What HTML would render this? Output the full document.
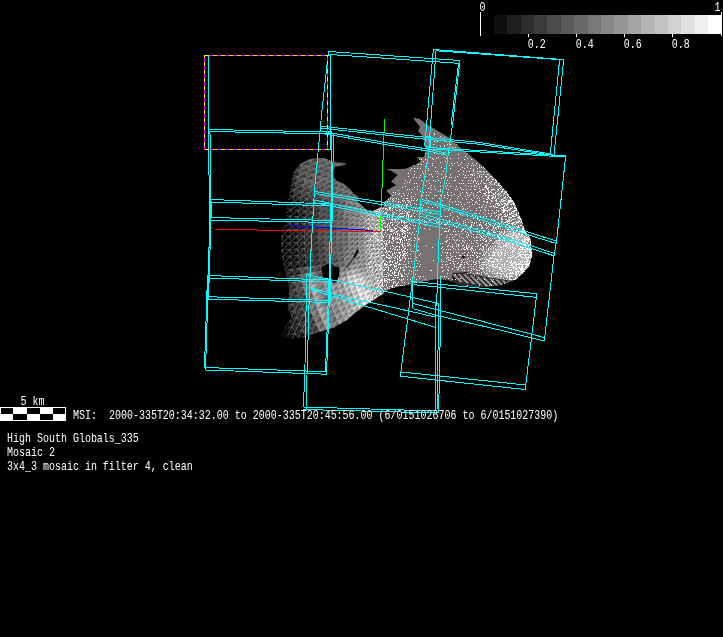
<!DOCTYPE html>
<html><head><meta charset="utf-8"><title>MSI mosaic view</title>
<style>
html,body{margin:0;padding:0;background:#000;overflow:hidden}
svg{display:block;position:absolute;left:0;top:0;will-change:transform}
text{font-family:"Liberation Mono","DejaVu Sans Mono",monospace;font-size:12.8px}
.c{fill:none;stroke:#0ff;stroke-width:1;shape-rendering:crispEdges}
.ax{fill:none;stroke-width:1;shape-rendering:crispEdges}
</style></head><body>
<svg width="723" height="637" viewBox="0 0 723 637">
<rect width="723" height="637" fill="#000"/>
<defs>
<clipPath id="cl"><polygon points="384.0,293.0 379.0,296.2 367.4,304.0 361.5,307.9 353.7,313.7 347.9,319.6 334.3,327.4 318.7,332.2 301.0,338.0 289.5,339.0 278.8,336.0 285.0,328.0 291.4,317.6 287.5,307.9 289.5,288.4 284.6,269.0 280.7,249.5 282.0,232.0 285.0,215.0 289.0,195.0 293.9,171.5 300.0,164.0 310.0,159.0 324.0,157.7 332.8,161.5 351.7,164.3 335.3,166.8 333.3,170.4 333.3,176.5 336.4,180.6 343.5,183.7 349.6,188.8 353.7,193.9 358.8,196.4 357.0,201.0 367.0,210.2 373.0,211.0 381.3,207.0 384.0,209.0"/></clipPath>
<clipPath id="cr"><polygon points="412.7,117.4 419.5,118.8 427.3,124.6 439.0,131.4 448.7,137.3 458.4,146.0 468.0,153.8 477.9,161.6 487.6,170.4 497.4,181.0 507.0,191.8 514.9,203.5 520.7,217.0 524.6,228.8 530.5,238.7 532.4,254.3 529.5,266.0 522.7,273.7 516.0,279.5 501.0,285.0 488.0,286.5 474.0,287.0 460.0,285.0 446.7,279.6 435.0,279.6 419.5,282.5 405.8,285.4 400.0,286.4 390.7,288.4 383.0,293.0 383.0,209.0 384.2,202.3 390.8,195.7 385.9,190.7 395.8,185.0 390.8,181.7 397.4,175.0 392.5,171.8 385.0,168.5 395.8,169.0 405.7,168.5 415.5,164.4 420.5,161.0 416.4,157.0 423.8,157.0 425.4,151.2 424.6,143.0 423.0,136.4 418.0,131.4 419.7,126.5 415.5,121.5"/></clipPath>
<filter id="bl" x="-20%" y="-20%" width="140%" height="140%"><feGaussianBlur stdDeviation="3.5"/></filter>
</defs>
<g clip-path="url(#cl)">
<polygon fill="#0a0a0a" points="384.0,293.0 379.0,296.2 367.4,304.0 361.5,307.9 353.7,313.7 347.9,319.6 334.3,327.4 318.7,332.2 301.0,338.0 289.5,339.0 278.8,336.0 285.0,328.0 291.4,317.6 287.5,307.9 289.5,288.4 284.6,269.0 280.7,249.5 282.0,232.0 285.0,215.0 289.0,195.0 293.9,171.5 300.0,164.0 310.0,159.0 324.0,157.7 332.8,161.5 351.7,164.3 335.3,166.8 333.3,170.4 333.3,176.5 336.4,180.6 343.5,183.7 349.6,188.8 353.7,193.9 358.8,196.4 357.0,201.0 367.0,210.2 373.0,211.0 381.3,207.0 384.0,209.0"/>
<path fill="rgb(0,0,0)" stroke="rgb(0,0,0)" stroke-width="0.3" d="M291.4,209.4L283.8,208.5L283.1,215.3ZM291.4,209.4L283.1,215.3L290.7,216.0ZM290.7,216.0L283.1,215.3L282.6,222.2ZM290.7,216.0L282.6,222.2L290.2,222.7ZM290.2,222.7L282.3,229.1L289.9,229.3ZM289.9,229.3L282.2,236.0L289.8,236.0ZM282.3,242.9L274.3,243.1L274.6,250.3ZM282.3,242.9L274.6,250.3L282.6,249.8ZM282.6,249.8L274.6,250.3L275.2,257.4ZM282.6,249.8L275.2,257.4L283.1,256.7ZM283.1,256.7L275.2,257.4L275.9,264.5ZM283.1,256.7L275.9,264.5L283.8,263.5Z"/>
<path fill="rgb(6,6,6)" stroke="rgb(6,6,6)" stroke-width="0.3" d="M298.8,210.3L290.7,216.0L298.1,216.7ZM293.4,196.2L284.7,201.7L292.3,202.8ZM292.3,202.8L284.7,201.7L283.8,208.5ZM292.3,202.8L283.8,208.5L291.4,209.4ZM290.2,222.7L282.6,222.2L282.3,229.1ZM289.9,229.3L282.3,229.1L282.2,236.0ZM289.8,236.0L282.3,242.9L289.9,242.7ZM289.9,242.7L282.3,242.9L282.6,249.8ZM289.9,242.7L282.6,249.8L290.2,249.3ZM290.7,256.0L283.8,263.5L291.4,262.6ZM282.3,229.1L274.3,228.9L274.2,236.0ZM282.3,229.1L274.2,236.0L282.2,236.0ZM282.2,236.0L274.2,236.0L274.3,243.1ZM282.2,236.0L274.3,243.1L282.3,242.9ZM289.5,319.8L284.5,329.5L292.1,326.4ZM294.9,333.0L290.5,343.0L297.9,339.4Z"/>
<path fill="rgb(12,12,12)" stroke="rgb(12,12,12)" stroke-width="0.3" d="M299.6,203.9L291.4,209.4L298.8,210.3ZM298.8,210.3L291.4,209.4L290.7,216.0ZM297.2,236.0L289.9,242.7L297.3,242.4ZM297.3,242.4L290.2,249.3L297.6,248.9ZM297.6,248.9L290.7,256.0L298.1,255.3ZM298.1,255.3L291.4,262.6L298.8,261.7ZM298.8,261.7L292.3,269.2L299.6,268.1ZM294.7,189.7L285.9,194.9L293.4,196.2ZM293.4,196.2L285.9,194.9L284.7,201.7ZM289.8,236.0L282.2,236.0L282.3,242.9ZM290.2,249.3L282.6,249.8L283.1,256.7ZM290.2,249.3L283.1,256.7L290.7,256.0ZM290.7,256.0L283.1,256.7L283.8,263.5ZM291.4,262.6L284.7,270.3L292.3,269.2ZM283.8,263.5L275.9,264.5L276.9,271.5ZM283.8,263.5L276.9,271.5L284.7,270.3ZM289.5,319.8L281.8,322.7L284.5,329.5ZM292.1,326.4L284.5,329.5L287.4,336.3ZM292.1,326.4L287.4,336.3L294.9,333.0ZM294.9,333.0L287.4,336.3L290.5,343.0Z"/>
<path fill="rgb(18,18,18)" stroke="rgb(18,18,18)" stroke-width="0.3" d="M305.9,211.1L298.1,216.7L305.2,217.3ZM304.7,223.5L297.3,229.6L304.5,229.8ZM304.5,242.2L297.6,248.9L304.7,248.5ZM300.7,197.5L292.3,202.8L299.6,203.9ZM299.6,203.9L292.3,202.8L291.4,209.4ZM298.1,216.7L290.2,222.7L297.6,223.1ZM297.6,223.1L289.9,229.3L297.3,229.6ZM297.3,229.6L289.8,236.0L297.2,236.0ZM297.2,236.0L289.8,236.0L289.9,242.7ZM297.3,242.4L289.9,242.7L290.2,249.3ZM297.6,248.9L290.2,249.3L290.7,256.0ZM298.1,255.3L290.7,256.0L291.4,262.6ZM298.8,261.7L291.4,262.6L292.3,269.2ZM291.4,262.6L283.8,263.5L284.7,270.3ZM302.1,329.7L297.9,339.4L305.0,336.0ZM305.0,336.0L301.1,345.8L308.1,342.1Z"/>
<path fill="rgb(24,24,24)" stroke="rgb(24,24,24)" stroke-width="0.3" d="M306.7,205.0L298.8,210.3L305.9,211.1ZM305.2,217.3L297.6,223.1L304.7,223.5ZM304.4,236.0L297.3,242.4L304.5,242.2ZM304.7,248.5L298.1,255.3L305.2,254.7ZM305.9,260.9L299.6,268.1L306.7,267.0ZM298.1,216.7L290.7,216.0L290.2,222.7ZM297.6,223.1L290.2,222.7L289.9,229.3ZM297.3,229.6L289.9,229.3L289.8,236.0ZM296.2,183.2L287.2,188.1L294.7,189.7ZM294.7,189.7L287.2,188.1L285.9,194.9ZM292.4,303.9L287.1,313.1L294.6,310.5ZM296.9,317.0L292.1,326.4L299.4,323.4ZM299.4,323.4L294.9,333.0L302.1,329.7ZM305.0,336.0L297.9,339.4L301.1,345.8Z"/>
<path fill="rgb(30,30,30)" stroke="rgb(30,30,30)" stroke-width="0.3" d="M313.5,206.0L305.9,211.1L312.7,212.0ZM311.6,224.0L304.5,229.8L311.3,230.0ZM311.6,248.0L305.2,254.7L312.1,254.0ZM312.7,260.0L306.7,267.0L313.5,266.0ZM307.7,198.8L299.6,203.9L306.7,205.0ZM306.7,205.0L299.6,203.9L298.8,210.3ZM305.9,211.1L298.8,210.3L298.1,216.7ZM305.2,217.3L298.1,216.7L297.6,223.1ZM304.7,223.5L297.6,223.1L297.3,229.6ZM304.5,229.8L297.2,236.0L304.4,236.0ZM304.5,242.2L297.3,242.4L297.6,248.9ZM305.2,254.7L298.8,261.7L305.9,260.9ZM305.9,260.9L298.8,261.7L299.6,268.1ZM300.7,197.5L293.4,196.2L292.3,202.8ZM299.6,268.1L293.4,275.8L300.7,274.5ZM296.2,183.2L288.7,181.4L287.2,188.1ZM292.3,269.2L285.9,277.1L293.4,275.8ZM297.9,295.3L292.4,303.9L299.7,301.7ZM304.1,314.3L299.4,323.4L306.5,320.5ZM288.7,290.6L282.8,299.4L290.5,297.3ZM290.5,297.3L284.8,306.3L292.4,303.9ZM294.6,310.5L289.5,319.8L296.9,317.0ZM302.1,329.7L294.9,333.0L297.9,339.4Z"/>
<path fill="rgb(36,36,36)" stroke="rgb(36,36,36)" stroke-width="0.3" d="M318.0,230.2L311.2,236.0L317.9,236.0ZM318.2,247.6L312.1,254.0L318.7,253.4ZM314.5,200.1L306.7,205.0L313.5,206.0ZM312.7,212.0L305.2,217.3L312.1,218.0ZM312.1,218.0L304.7,223.5L311.6,224.0ZM311.2,236.0L304.5,242.2L311.3,242.0ZM311.3,242.0L304.7,248.5L311.6,248.0ZM304.5,229.8L297.3,229.6L297.2,236.0ZM304.4,236.0L297.2,236.0L297.3,242.4ZM304.7,248.5L297.6,248.9L298.1,255.3ZM301.9,191.2L293.4,196.2L300.7,197.5ZM299.7,170.3L290.5,174.7L297.9,176.7ZM297.9,176.7L288.7,181.4L296.2,183.2ZM292.3,269.2L284.7,270.3L285.9,277.1ZM293.4,275.8L287.2,283.9L294.7,282.3ZM294.7,282.3L288.7,290.6L296.2,288.8ZM288.7,290.6L281.0,292.5L282.8,299.4ZM290.5,297.3L282.8,299.4L284.8,306.3ZM292.4,303.9L284.8,306.3L287.1,313.1ZM294.6,310.5L287.1,313.1L289.5,319.8ZM296.9,317.0L289.5,319.8L292.1,326.4ZM299.4,323.4L292.1,326.4L294.9,333.0Z"/>
<path fill="rgb(42,42,42)" stroke="rgb(42,42,42)" stroke-width="0.3" d="M320.1,207.0L312.7,212.0L319.3,212.8ZM319.3,212.8L312.1,218.0L318.7,218.6ZM318.7,218.6L311.6,224.0L318.2,224.4ZM317.9,236.0L311.3,242.0L318.0,241.8ZM318.0,241.8L311.6,248.0L318.2,247.6ZM318.7,253.4L312.7,260.0L319.3,259.2ZM313.5,206.0L306.7,205.0L305.9,211.1ZM311.6,224.0L304.7,223.5L304.5,229.8ZM311.3,230.0L304.4,236.0L311.2,236.0ZM311.6,248.0L304.7,248.5L305.2,254.7ZM312.1,254.0L305.9,260.9L312.7,260.0ZM312.7,260.0L305.9,260.9L306.7,267.0ZM307.7,198.8L300.7,197.5L299.6,203.9ZM305.2,254.7L298.1,255.3L298.8,261.7ZM303.4,184.9L294.7,189.7L301.9,191.2ZM299.6,268.1L292.3,269.2L293.4,275.8ZM296.2,288.8L290.5,297.3L297.9,295.3ZM299.7,301.7L294.6,310.5L301.8,308.0ZM301.8,308.0L296.9,317.0L304.1,314.3ZM306.5,320.5L302.1,329.7L309.1,326.6ZM309.1,326.6L305.0,336.0L311.9,332.6ZM311.9,332.6L308.1,342.1L314.9,338.6Z"/>
<path fill="rgb(48,48,48)" stroke="rgb(48,48,48)" stroke-width="0.3" d="M325.7,258.5L320.1,265.0L326.4,264.0ZM321.0,201.3L313.5,206.0L320.1,207.0ZM318.2,224.4L311.3,230.0L318.0,230.2ZM319.3,259.2L313.5,266.0L320.1,265.0ZM314.5,200.1L307.7,198.8L306.7,205.0ZM312.7,212.0L305.9,211.1L305.2,217.3ZM312.1,218.0L305.2,217.3L304.7,223.5ZM311.2,236.0L304.4,236.0L304.5,242.2ZM308.9,192.7L300.7,197.5L307.7,198.8ZM300.7,274.5L294.7,282.3L301.9,280.8ZM306.8,299.5L301.8,308.0L308.8,305.6ZM311.0,311.7L306.5,320.5L313.3,317.7ZM313.3,317.7L309.1,326.6L315.9,323.6ZM315.9,323.6L311.9,332.6L318.6,329.4ZM318.6,329.4L314.9,338.6L321.5,335.2ZM301.8,164.0L292.4,168.1L299.7,170.3ZM297.9,176.7L290.5,174.7L288.7,181.4ZM293.4,275.8L285.9,277.1L287.2,283.9ZM294.7,282.3L287.2,283.9L288.7,290.6ZM297.9,295.3L290.5,297.3L292.4,303.9ZM304.1,314.3L296.9,317.0L299.4,323.4Z"/>
<path fill="rgb(54,54,54)" stroke="rgb(54,54,54)" stroke-width="0.3" d="M325.1,219.1L318.2,224.4L324.7,224.7ZM324.4,241.6L318.2,247.6L324.7,247.3ZM324.7,247.3L318.7,253.4L325.1,252.9ZM325.1,252.9L319.3,259.2L325.7,258.5ZM322.2,195.5L314.5,200.1L321.0,201.3ZM319.3,212.8L312.7,212.0L312.1,218.0ZM318.0,230.2L311.3,230.0L311.2,236.0ZM318.2,247.6L311.6,248.0L312.1,254.0ZM315.7,194.2L307.7,198.8L314.5,200.1ZM311.3,230.0L304.5,229.8L304.4,236.0ZM311.3,242.0L304.5,242.2L304.7,248.5ZM312.1,254.0L305.2,254.7L305.9,260.9ZM310.3,186.6L301.9,191.2L308.9,192.7ZM305.0,178.7L296.2,183.2L303.4,184.9ZM301.9,191.2L294.7,189.7L293.4,196.2ZM305.0,293.3L299.7,301.7L306.8,299.5ZM304.1,157.7L294.6,161.5L301.8,164.0ZM299.7,170.3L292.4,168.1L290.5,174.7ZM299.7,301.7L292.4,303.9L294.6,310.5ZM301.8,308.0L294.6,310.5L296.9,317.0ZM306.5,320.5L299.4,323.4L302.1,329.7ZM311.9,332.6L305.0,336.0L308.1,342.1Z"/>
<path fill="rgb(60,60,60)" stroke="rgb(60,60,60)" stroke-width="0.3" d="M334.5,198.2L327.4,202.4L333.4,203.5ZM332.6,208.9L325.7,213.5L331.8,214.3ZM331.8,214.3L325.1,219.1L331.3,219.7ZM330.8,225.1L324.4,230.4L330.6,230.6ZM327.4,202.4L320.1,207.0L326.4,208.0ZM326.4,208.0L319.3,212.8L325.7,213.5ZM325.7,213.5L318.7,218.6L325.1,219.1ZM324.7,224.7L318.0,230.2L324.4,230.4ZM324.4,230.4L317.9,236.0L324.3,236.0ZM324.3,236.0L318.0,241.8L324.4,241.6ZM323.5,189.9L315.7,194.2L322.2,195.5ZM320.1,207.0L313.5,206.0L312.7,212.0ZM318.7,218.6L312.1,218.0L311.6,224.0ZM317.9,236.0L311.2,236.0L311.3,242.0ZM318.0,241.8L311.3,242.0L311.6,248.0ZM318.7,253.4L312.1,254.0L312.7,260.0ZM319.3,259.2L312.7,260.0L313.5,266.0ZM320.1,265.0L314.5,271.9L321.0,270.7ZM317.0,188.3L308.9,192.7L315.7,194.2ZM306.7,267.0L300.7,274.5L307.7,273.2ZM306.8,172.5L297.9,176.7L305.0,178.7ZM303.4,184.9L296.2,183.2L294.7,189.7ZM300.7,274.5L293.4,275.8L294.7,282.3ZM301.9,280.8L296.2,288.8L303.4,287.1ZM303.4,287.1L297.9,295.3L305.0,293.3ZM308.8,305.6L304.1,314.3L311.0,311.7ZM296.2,288.8L288.7,290.6L290.5,297.3ZM309.1,326.6L302.1,329.7L305.0,336.0Z"/>
<path fill="rgb(66,66,66)" stroke="rgb(66,66,66)" stroke-width="0.3" d="M338.5,209.8L331.8,214.3L337.8,215.0ZM337.8,215.0L331.3,219.7L337.2,220.2ZM337.8,257.0L332.6,263.1L338.5,262.2ZM333.4,203.5L326.4,208.0L332.6,208.9ZM330.6,230.6L324.3,236.0L330.5,236.0ZM330.6,241.4L324.7,247.3L330.8,246.9ZM330.8,246.9L325.1,252.9L331.3,252.3ZM331.3,252.3L325.7,258.5L331.8,257.7ZM331.8,257.7L326.4,264.0L332.6,263.1ZM329.7,191.4L322.2,195.5L328.4,196.9ZM328.4,196.9L321.0,201.3L327.4,202.4ZM326.4,264.0L321.0,270.7L327.4,269.6ZM321.0,201.3L314.5,200.1L313.5,206.0ZM318.2,224.4L311.6,224.0L311.3,230.0ZM322.1,170.9L313.6,174.6L320.2,176.7ZM320.2,176.7L311.9,180.6L318.5,182.5ZM319.9,157.1L311.0,160.3L317.7,162.9ZM317.7,162.9L308.8,166.4L315.6,168.7ZM315.6,168.7L306.8,172.5L313.6,174.6ZM313.6,174.6L305.0,178.7L311.9,180.6ZM308.9,192.7L301.9,191.2L300.7,197.5ZM311.0,160.3L301.8,164.0L308.8,166.4ZM308.8,166.4L299.7,170.3L306.8,172.5ZM306.8,299.5L299.7,301.7L301.8,308.0ZM311.0,311.7L304.1,314.3L306.5,320.5ZM313.3,317.7L306.5,320.5L309.1,326.6ZM315.9,323.6L309.1,326.6L311.9,332.6ZM301.8,164.0L294.6,161.5L292.4,168.1Z"/>
<path fill="rgb(72,72,72)" stroke="rgb(72,72,72)" stroke-width="0.3" d="M355.2,187.5L348.4,190.7L353.8,192.2ZM343.5,215.7L337.2,220.2L343.0,220.7ZM346.0,179.1L338.6,182.4L344.3,184.1ZM340.4,199.4L333.4,203.5L339.3,204.6ZM339.3,204.6L332.6,208.9L338.5,209.8ZM336.8,225.5L330.6,230.6L336.6,230.7ZM336.6,230.7L330.5,236.0L336.5,236.0ZM336.6,241.3L330.8,246.9L336.8,246.5ZM338.5,262.2L333.4,268.5L339.3,267.4ZM344.1,167.0L336.4,169.9L342.2,172.1ZM338.6,182.4L331.1,185.9L337.1,187.6ZM337.1,187.6L329.7,191.4L335.7,192.9ZM335.7,192.9L328.4,196.9L334.5,198.2ZM331.3,219.7L324.7,224.7L330.8,225.1ZM330.5,236.0L324.4,241.6L330.6,241.4ZM338.4,164.6L330.3,167.6L336.4,169.9ZM336.4,169.9L328.4,173.1L334.4,175.2ZM332.7,180.5L324.9,184.2L331.1,185.9ZM331.1,185.9L323.5,189.9L329.7,191.4ZM325.1,219.1L318.7,218.6L318.2,224.4ZM324.4,241.6L318.0,241.8L318.2,247.6ZM324.7,247.3L318.2,247.6L318.7,253.4ZM325.7,258.5L319.3,259.2L320.1,265.0ZM334.8,156.9L326.3,159.7L332.5,162.2ZM330.3,167.6L322.1,170.9L328.4,173.1ZM328.4,173.1L320.2,176.7L326.6,178.6ZM324.9,184.2L317.0,188.3L323.5,189.9ZM322.2,195.5L315.7,194.2L314.5,200.1ZM321.0,270.7L315.7,277.8L322.2,276.5ZM328.7,154.1L319.9,157.1L326.3,159.7ZM315.7,194.2L308.9,192.7L307.7,198.8ZM313.5,266.0L307.7,273.2L314.5,271.9ZM311.9,180.6L303.4,184.9L310.3,186.6ZM313.3,154.3L304.1,157.7L311.0,160.3ZM305.0,293.3L297.9,295.3L299.7,301.7ZM318.6,329.4L311.9,332.6L314.9,338.6Z"/>
<path fill="rgb(78,78,78)" stroke="rgb(78,78,78)" stroke-width="0.3" d="M349.9,185.8L342.9,189.2L348.4,190.7ZM346.0,200.6L339.3,204.6L345.0,205.6ZM342.4,241.1L336.8,246.5L342.6,246.2ZM342.6,246.2L337.2,251.8L343.0,251.3ZM343.5,256.3L338.5,262.2L344.2,261.4ZM344.3,184.1L337.1,187.6L342.9,189.2ZM342.9,189.2L335.7,192.9L341.5,194.3ZM341.5,194.3L334.5,198.2L340.4,199.4ZM337.2,220.2L330.8,225.1L336.8,225.5ZM336.5,236.0L330.6,241.4L336.6,241.3ZM336.8,246.5L331.3,252.3L337.2,251.8ZM337.2,251.8L331.8,257.7L337.8,257.0ZM340.3,177.2L332.7,180.5L338.6,182.4ZM332.6,263.1L327.4,269.6L333.4,268.5ZM340.6,159.5L332.5,162.2L338.4,164.6ZM334.4,175.2L326.6,178.6L332.7,180.5ZM327.4,202.4L321.0,201.3L320.1,207.0ZM324.7,224.7L318.2,224.4L318.0,230.2ZM325.1,252.9L318.7,253.4L319.3,259.2ZM332.5,162.2L324.1,165.3L330.3,167.6ZM326.6,178.6L318.5,182.5L324.9,184.2ZM323.5,189.9L317.0,188.3L315.7,194.2ZM326.3,159.7L317.7,162.9L324.1,165.3ZM324.1,165.3L315.6,168.7L322.1,170.9ZM318.5,182.5L310.3,186.6L317.0,188.3ZM310.3,186.6L303.4,184.9L301.9,191.2ZM306.7,267.0L299.6,268.1L300.7,274.5ZM307.7,273.2L301.9,280.8L308.9,279.3ZM305.0,178.7L297.9,176.7L296.2,183.2ZM301.9,280.8L294.7,282.3L296.2,288.8ZM303.4,287.1L296.2,288.8L297.9,295.3ZM308.8,305.6L301.8,308.0L304.1,314.3ZM304.1,157.7L296.9,155.0L294.6,161.5Z"/>
<path fill="rgb(84,84,84)" stroke="rgb(84,84,84)" stroke-width="0.3" d="M359.0,193.7L352.6,197.0L357.8,198.3ZM357.8,198.3L351.5,201.8L356.7,202.9ZM353.8,192.2L347.1,195.7L352.6,197.0ZM348.5,221.2L342.6,225.8L348.1,226.2ZM347.9,231.1L342.3,236.0L347.8,236.0ZM347.8,236.0L342.4,241.1L347.9,240.9ZM347.9,240.9L342.6,246.2L348.1,245.8ZM348.1,245.8L343.0,251.3L348.5,250.8ZM348.5,250.8L343.5,256.3L349.0,255.7ZM348.4,190.7L341.5,194.3L347.1,195.7ZM347.1,195.7L340.4,199.4L346.0,200.6ZM345.0,205.6L338.5,209.8L344.2,210.6ZM344.2,210.6L337.8,215.0L343.5,215.7ZM343.0,220.7L336.8,225.5L342.6,225.8ZM342.6,225.8L336.6,230.7L342.4,230.9ZM342.4,230.9L336.5,236.0L342.3,236.0ZM342.3,236.0L336.6,241.3L342.4,241.1ZM343.0,251.3L337.8,257.0L343.5,256.3ZM344.2,261.4L339.3,267.4L345.0,266.4ZM346.3,162.0L338.4,164.6L344.1,167.0ZM334.5,198.2L328.4,196.9L327.4,202.4ZM332.6,208.9L326.4,208.0L325.7,213.5ZM331.8,214.3L325.7,213.5L325.1,219.1ZM330.8,225.1L324.7,224.7L324.4,230.4ZM326.4,208.0L320.1,207.0L319.3,212.8ZM325.7,213.5L319.3,212.8L318.7,218.6ZM324.4,230.4L318.0,230.2L317.9,236.0ZM324.3,236.0L317.9,236.0L318.0,241.8ZM327.4,269.6L322.2,276.5L328.4,275.1ZM320.1,265.0L313.5,266.0L314.5,271.9ZM317.0,188.3L310.3,186.6L308.9,192.7ZM306.8,172.5L299.7,170.3L297.9,176.7Z"/>
<path fill="rgb(90,90,90)" stroke="rgb(90,90,90)" stroke-width="0.3" d="M364.0,195.0L357.8,198.3L362.8,199.5ZM362.8,199.5L356.7,202.9L361.8,204.0ZM356.7,202.9L350.5,206.6L355.8,207.6ZM353.9,221.7L348.1,226.2L353.5,226.5ZM353.5,226.5L347.9,231.1L353.3,231.2ZM353.3,240.8L348.1,245.8L353.5,245.5ZM353.9,250.3L349.0,255.7L354.4,255.0ZM352.6,197.0L346.0,200.6L351.5,201.8ZM351.5,201.8L345.0,205.6L350.5,206.6ZM349.0,216.3L343.0,220.7L348.5,221.2ZM348.1,226.2L342.4,230.9L347.9,231.1ZM349.0,255.7L344.2,261.4L349.7,260.5ZM338.5,209.8L332.6,208.9L331.8,214.3ZM337.8,215.0L331.8,214.3L331.3,219.7ZM337.8,257.0L331.8,257.7L332.6,263.1ZM333.4,203.5L327.4,202.4L326.4,208.0ZM330.6,230.6L324.4,230.4L324.3,236.0ZM330.6,241.4L324.4,241.6L324.7,247.3ZM330.8,246.9L324.7,247.3L325.1,252.9ZM331.3,252.3L325.1,252.9L325.7,258.5ZM331.8,257.7L325.7,258.5L326.4,264.0ZM333.4,268.5L328.4,275.1L334.5,273.8ZM329.7,191.4L323.5,189.9L322.2,195.5ZM328.4,196.9L322.2,195.5L321.0,201.3ZM326.4,264.0L320.1,265.0L321.0,270.7ZM320.2,176.7L313.6,174.6L311.9,180.6ZM319.9,157.1L313.3,154.3L311.0,160.3ZM317.7,162.9L311.0,160.3L308.8,166.4ZM315.6,168.7L308.8,166.4L306.8,172.5ZM313.6,174.6L306.8,172.5L305.0,178.7ZM311.9,291.4L306.8,299.5L313.6,297.4ZM319.9,314.9L315.9,323.6L322.4,320.7ZM308.8,166.4L301.8,164.0L299.7,170.3Z"/>
<path fill="rgb(96,96,96)" stroke="rgb(96,96,96)" stroke-width="0.3" d="M360.9,208.5L355.0,212.3L360.1,213.0ZM360.1,213.0L354.4,217.0L359.5,217.6ZM359.0,222.2L353.5,226.5L358.7,226.8ZM358.5,231.4L353.2,236.0L358.4,236.0ZM358.4,236.0L353.3,240.8L358.5,240.6ZM358.5,240.6L353.5,245.5L358.7,245.2ZM358.7,245.2L353.9,250.3L359.0,249.8ZM359.5,254.4L355.0,259.7L360.1,259.0ZM355.8,207.6L349.7,211.5L355.0,212.3ZM355.0,212.3L349.0,216.3L354.4,217.0ZM353.2,236.0L347.9,240.9L353.3,240.8ZM353.5,245.5L348.5,250.8L353.9,250.3ZM354.4,255.0L349.7,260.5L355.0,259.7ZM350.5,206.6L344.2,210.6L349.7,211.5ZM349.7,211.5L343.5,215.7L349.0,216.3ZM349.7,260.5L345.0,266.4L350.5,265.4ZM346.0,179.1L340.3,177.2L338.6,182.4ZM340.4,199.4L334.5,198.2L333.4,203.5ZM339.3,204.6L333.4,203.5L332.6,208.9ZM336.8,225.5L330.8,225.1L330.6,230.6ZM336.6,230.7L330.6,230.6L330.5,236.0ZM336.6,241.3L330.6,241.4L330.8,246.9ZM339.3,267.4L334.5,273.8L340.4,272.6ZM337.1,187.6L331.1,185.9L329.7,191.4ZM335.7,192.9L329.7,191.4L328.4,196.9ZM331.3,219.7L325.1,219.1L324.7,224.7ZM330.5,236.0L324.3,236.0L324.4,241.6ZM331.1,185.9L324.9,184.2L323.5,189.9ZM334.8,156.9L328.7,154.1L326.3,159.7ZM330.3,167.6L324.1,165.3L322.1,170.9ZM328.4,173.1L322.1,170.9L320.2,176.7ZM324.9,184.2L318.5,182.5L317.0,188.3ZM326.6,293.4L322.1,301.1L328.4,298.9ZM328.4,298.9L324.1,306.7L330.3,304.4ZM330.3,304.4L326.3,312.3L332.5,309.8ZM334.8,315.1L331.2,323.3L337.2,320.4ZM337.2,320.4L333.9,328.7L339.8,325.6ZM328.7,154.1L322.4,151.3L319.9,157.1ZM322.1,170.9L315.6,168.7L313.6,174.6ZM313.5,266.0L306.7,267.0L307.7,273.2ZM311.9,180.6L305.0,178.7L303.4,184.9ZM308.9,279.3L303.4,287.1L310.3,285.4ZM310.3,285.4L305.0,293.3L311.9,291.4ZM313.6,297.4L308.8,305.6L315.6,303.3ZM315.6,303.3L311.0,311.7L317.7,309.1ZM322.4,320.7L318.6,329.4L325.0,326.3ZM325.0,326.3L321.5,335.2L327.8,331.9ZM313.3,154.3L306.5,151.5L304.1,157.7ZM311.0,160.3L304.1,157.7L301.8,164.0Z"/>
<path fill="rgb(102,102,102)" stroke="rgb(102,102,102)" stroke-width="0.3" d="M370.6,210.3L365.1,213.8L369.9,214.5ZM366.7,205.0L360.9,208.5L365.8,209.4ZM365.8,209.4L360.1,213.0L365.1,213.8ZM363.4,236.0L358.5,240.6L363.5,240.5ZM361.8,204.0L355.8,207.6L360.9,208.5ZM359.5,217.6L353.9,221.7L359.0,222.2ZM358.7,226.8L353.3,231.2L358.5,231.4ZM359.0,249.8L354.4,255.0L359.5,254.4ZM354.4,217.0L348.5,221.2L353.9,221.7ZM353.3,231.2L347.8,236.0L353.2,236.0ZM355.0,259.7L350.5,265.4L355.8,264.4ZM355.2,187.5L349.9,185.8L348.4,190.7ZM343.5,215.7L337.8,215.0L337.2,220.2ZM342.6,246.2L336.8,246.5L337.2,251.8ZM341.5,194.3L335.7,192.9L334.5,198.2ZM337.2,220.2L331.3,219.7L330.8,225.1ZM336.5,236.0L330.5,236.0L330.6,241.4ZM336.8,246.5L330.8,246.9L331.3,252.3ZM337.2,251.8L331.3,252.3L331.8,257.7ZM338.5,262.2L332.6,263.1L333.4,268.5ZM344.1,167.0L338.4,164.6L336.4,169.9ZM338.6,182.4L332.7,180.5L331.1,185.9ZM340.6,159.5L334.8,156.9L332.5,162.2ZM338.4,164.6L332.5,162.2L330.3,167.6ZM336.4,169.9L330.3,167.6L328.4,173.1ZM334.4,175.2L328.4,173.1L326.6,178.6ZM332.7,180.5L326.6,178.6L324.9,184.2ZM321.0,270.7L314.5,271.9L315.7,277.8ZM326.3,159.7L319.9,157.1L317.7,162.9ZM324.1,165.3L317.7,162.9L315.6,168.7ZM318.5,182.5L311.9,180.6L310.3,186.6ZM314.5,271.9L308.9,279.3L315.7,277.8ZM317.7,309.1L313.3,317.7L319.9,314.9Z"/>
<path fill="rgb(108,108,108)" stroke="rgb(108,108,108)" stroke-width="0.3" d="M381.3,204.0L376.0,207.0L380.4,208.0ZM380.4,208.0L375.2,211.1L379.6,211.9ZM375.2,211.1L369.9,214.5L374.5,215.2ZM373.0,231.8L368.3,236.0L372.9,236.0ZM376.9,269.1L373.5,274.3L378.0,273.1ZM369.9,214.5L364.5,218.2L369.3,218.8ZM369.3,218.8L364.0,222.6L368.9,223.1ZM368.9,223.1L363.7,227.1L368.5,227.4ZM368.5,227.4L363.5,231.5L368.3,231.7ZM368.3,236.0L363.5,240.5L368.3,240.3ZM368.3,240.3L363.7,244.9L368.5,244.6ZM368.5,244.6L364.0,249.4L368.9,248.9ZM369.3,253.2L365.1,258.2L369.9,257.5ZM369.9,257.5L365.8,262.6L370.6,261.7ZM365.1,213.8L359.5,217.6L364.5,218.2ZM364.5,218.2L359.0,222.2L364.0,222.6ZM364.0,222.6L358.7,226.8L363.7,227.1ZM363.7,227.1L358.5,231.4L363.5,231.5ZM363.5,231.5L358.4,236.0L363.4,236.0ZM363.5,240.5L358.7,245.2L363.7,244.9ZM363.7,244.9L359.0,249.8L364.0,249.4ZM364.0,249.4L359.5,254.4L364.5,253.8ZM360.1,259.0L355.8,264.4L360.9,263.5ZM350.5,265.4L346.0,271.4L351.5,270.2ZM349.9,185.8L344.3,184.1L342.9,189.2ZM348.4,190.7L342.9,189.2L341.5,194.3ZM347.1,195.7L341.5,194.3L340.4,199.4ZM346.0,200.6L340.4,199.4L339.3,204.6ZM345.0,205.6L339.3,204.6L338.5,209.8ZM343.0,220.7L337.2,220.2L336.8,225.5ZM342.4,241.1L336.6,241.3L336.8,246.5ZM343.5,256.3L337.8,257.0L338.5,262.2ZM345.0,266.4L340.4,272.6L346.0,271.4ZM344.3,184.1L338.6,182.4L337.1,187.6ZM342.9,189.2L337.1,187.6L335.7,192.9ZM346.3,162.0L340.6,159.5L338.4,164.6ZM340.3,177.2L334.4,175.2L332.7,180.5ZM332.6,263.1L326.4,264.0L327.4,269.6ZM332.7,291.5L328.4,298.9L334.4,296.8ZM338.4,307.4L334.8,315.1L340.6,312.5ZM332.5,162.2L326.3,159.7L324.1,165.3ZM326.6,178.6L320.2,176.7L318.5,182.5ZM322.2,276.5L317.0,283.7L323.5,282.1ZM323.5,282.1L318.5,289.5L324.9,287.8ZM324.9,287.8L320.2,295.3L326.6,293.4ZM332.5,309.8L328.7,317.9L334.8,315.1ZM307.7,273.2L300.7,274.5L301.9,280.8Z"/>
<path fill="rgb(114,114,114)" stroke="rgb(114,114,114)" stroke-width="0.3" d="M388.0,213.4L383.3,216.5L387.4,217.2ZM386.9,220.9L382.3,224.3L386.5,224.7ZM386.1,232.2L381.8,236.0L386.0,236.0ZM386.1,239.8L382.0,243.8L386.2,243.6ZM386.5,247.3L382.7,251.6L386.9,251.1ZM386.9,251.1L383.3,255.5L387.4,254.8ZM385.5,205.1L380.4,208.0L384.7,208.9ZM384.7,208.9L379.6,211.9L383.9,212.7ZM382.3,224.3L377.7,227.9L382.0,228.2ZM381.9,232.1L377.4,236.0L381.8,236.0ZM381.9,239.9L377.7,244.1L382.0,243.8ZM382.0,243.8L378.0,248.1L382.3,247.7ZM382.3,247.7L378.4,252.1L382.7,251.6ZM382.7,251.6L379.0,256.1L383.3,255.5ZM383.9,259.3L380.4,264.0L384.7,263.1ZM379.6,211.9L374.5,215.2L379.0,215.9ZM378.4,219.9L373.5,223.5L378.0,223.9ZM378.0,223.9L373.2,227.7L377.7,227.9ZM377.7,227.9L373.0,231.8L377.5,232.0ZM377.5,232.0L372.9,236.0L377.4,236.0ZM377.4,236.0L373.0,240.2L377.5,240.0ZM378.0,248.1L373.9,252.6L378.4,252.1ZM378.4,252.1L374.5,256.8L379.0,256.1ZM379.0,256.1L375.2,260.9L379.6,260.1ZM381.3,268.0L378.0,273.1L382.3,271.9ZM383.5,275.8L380.4,281.1L384.7,279.6ZM387.6,287.2L385.0,292.7L389.1,290.9ZM376.0,207.0L370.6,210.3L375.2,211.1ZM374.5,215.2L369.3,218.8L373.9,219.4ZM373.5,223.5L368.5,227.4L373.2,227.7ZM372.9,236.0L368.3,240.3L373.0,240.2ZM373.0,240.2L368.5,244.6L373.2,244.3ZM373.2,244.3L368.9,248.9L373.5,248.5ZM373.5,248.5L369.3,253.2L373.9,252.6ZM375.2,260.9L371.4,266.0L376.0,265.0ZM383.4,288.9L380.8,294.6L385.0,292.7ZM371.4,206.0L365.8,209.4L370.6,210.3ZM368.3,231.7L363.4,236.0L368.3,236.0ZM368.9,248.9L364.5,253.8L369.3,253.2ZM370.6,261.7L366.7,267.0L371.4,266.0ZM364.5,253.8L360.1,259.0L365.1,258.2ZM365.1,258.2L360.9,263.5L365.8,262.6ZM365.8,262.6L361.8,268.0L366.7,267.0ZM360.9,263.5L356.7,269.1L361.8,268.0ZM359.0,193.7L353.8,192.2L352.6,197.0ZM357.8,198.3L352.6,197.0L351.5,201.8ZM353.8,192.2L348.4,190.7L347.1,195.7ZM348.5,221.2L343.0,220.7L342.6,225.8ZM347.8,236.0L342.3,236.0L342.4,241.1ZM347.9,240.9L342.4,241.1L342.6,246.2ZM344.2,210.6L338.5,209.8L337.8,215.0ZM342.6,225.8L336.8,225.5L336.6,230.7ZM342.4,230.9L336.6,230.7L336.5,236.0ZM342.3,236.0L336.5,236.0L336.6,241.3ZM343.0,251.3L337.2,251.8L337.8,257.0ZM344.2,261.4L338.5,262.2L339.3,267.4ZM340.4,272.6L335.7,279.1L341.5,277.7ZM334.5,273.8L329.7,280.6L335.7,279.1ZM327.4,269.6L321.0,270.7L322.2,276.5ZM328.4,275.1L323.5,282.1L329.7,280.6Z"/>
<path fill="rgb(120,120,120)" stroke="rgb(120,120,120)" stroke-width="0.3" d="M388.8,209.7L383.9,212.7L388.0,213.4ZM387.4,217.2L382.7,220.4L386.9,220.9ZM386.5,224.7L382.0,228.2L386.2,228.4ZM386.2,228.4L381.9,232.1L386.1,232.2ZM386.0,236.0L381.9,239.9L386.1,239.8ZM386.2,243.6L382.3,247.7L386.5,247.3ZM387.4,254.8L383.9,259.3L388.0,258.6ZM383.9,212.7L379.0,215.9L383.3,216.5ZM382.7,220.4L378.0,223.9L382.3,224.3ZM381.8,236.0L377.5,240.0L381.9,239.9ZM383.3,255.5L379.6,260.1L383.9,259.3ZM384.7,263.1L381.3,268.0L385.5,266.9ZM385.5,266.9L382.3,271.9L386.5,270.7ZM386.5,270.7L383.5,275.8L387.6,274.5ZM387.6,274.5L384.7,279.6L388.8,278.2ZM379.0,215.9L373.9,219.4L378.4,219.9ZM377.5,240.0L373.2,244.3L377.7,244.1ZM377.7,244.1L373.5,248.5L378.0,248.1ZM379.6,260.1L376.0,265.0L380.4,264.0ZM380.4,264.0L376.9,269.1L381.3,268.0ZM384.7,279.6L381.9,285.0L386.1,283.4ZM373.9,219.4L368.9,223.1L373.5,223.5ZM373.2,227.7L368.3,231.7L373.0,231.8ZM373.9,252.6L369.9,257.5L374.5,256.8ZM374.5,256.8L370.6,261.7L375.2,260.9ZM376.0,265.0L372.4,270.2L376.9,269.1ZM378.0,273.1L374.7,278.5L379.2,277.1ZM379.2,277.1L376.0,282.6L380.4,281.1ZM385.0,292.7L382.6,298.5L386.8,296.5ZM371.4,266.0L367.7,271.3L372.4,270.2ZM372.4,270.2L368.8,275.6L373.5,274.3ZM374.7,278.5L371.4,284.1L376.0,282.6ZM376.0,282.6L373.0,288.3L377.5,286.6ZM377.5,286.6L374.6,292.5L379.1,290.6ZM366.7,267.0L362.8,272.5L367.7,271.3ZM364.0,195.0L359.0,193.7L357.8,198.3ZM355.8,264.4L351.5,270.2L356.7,269.1ZM352.6,197.0L347.1,195.7L346.0,200.6ZM348.1,226.2L342.6,225.8L342.4,230.9ZM347.9,231.1L342.4,230.9L342.3,236.0ZM348.1,245.8L342.6,246.2L343.0,251.3ZM348.5,250.8L343.0,251.3L343.5,256.3ZM346.0,271.4L341.5,277.7L347.1,276.3ZM333.4,268.5L327.4,269.6L328.4,275.1ZM335.7,279.1L331.1,286.1L337.1,284.4ZM337.1,284.4L332.7,291.5L338.6,289.6ZM329.7,280.6L324.9,287.8L331.1,286.1ZM331.1,286.1L326.6,293.4L332.7,291.5ZM334.4,296.8L330.3,304.4L336.4,302.1ZM336.4,302.1L332.5,309.8L338.4,307.4ZM340.6,312.5L337.2,320.4L343.0,317.6ZM343.0,317.6L339.8,325.6L345.5,322.7Z"/>
<path fill="rgb(126,126,126)" stroke="rgb(126,126,126)" stroke-width="0.3" d="M388.0,258.6L384.7,263.1L388.8,262.3ZM383.3,216.5L378.4,219.9L382.7,220.4ZM382.0,228.2L377.5,232.0L381.9,232.1ZM382.3,271.9L379.2,277.1L383.5,275.8ZM386.1,283.4L383.4,288.9L387.6,287.2ZM380.4,281.1L377.5,286.6L381.9,285.0ZM381.9,285.0L379.1,290.6L383.4,288.9ZM373.5,274.3L370.1,279.9L374.7,278.5ZM362.8,199.5L357.8,198.3L356.7,202.9ZM361.8,268.0L357.8,273.7L362.8,272.5ZM356.7,202.9L351.5,201.8L350.5,206.6ZM355.8,207.6L350.5,206.6L349.7,211.5ZM355.0,212.3L349.7,211.5L349.0,216.3ZM353.9,221.7L348.5,221.2L348.1,226.2ZM353.5,226.5L348.1,226.2L347.9,231.1ZM353.3,240.8L347.9,240.9L348.1,245.8ZM353.9,250.3L348.5,250.8L349.0,255.7ZM351.5,201.8L346.0,200.6L345.0,205.6ZM350.5,206.6L345.0,205.6L344.2,210.6ZM349.7,211.5L344.2,210.6L343.5,215.7ZM349.0,216.3L343.5,215.7L343.0,220.7ZM349.0,255.7L343.5,256.3L344.2,261.4ZM349.7,260.5L344.2,261.4L345.0,266.4ZM339.3,267.4L333.4,268.5L334.5,273.8ZM342.9,282.8L338.6,289.6L344.3,287.9ZM346.0,292.9L342.2,299.9L347.7,297.8ZM340.3,294.8L336.4,302.1L342.2,299.9ZM342.2,299.9L338.4,307.4L344.1,305.0ZM344.1,305.0L340.6,312.5L346.3,310.0ZM348.6,314.9L345.5,322.7L351.0,319.8ZM322.1,301.1L317.7,309.1L324.1,306.7ZM326.3,312.3L322.4,320.7L328.7,317.9ZM328.7,317.9L325.0,326.3L331.2,323.3ZM331.2,323.3L327.8,331.9L333.9,328.7ZM308.9,279.3L301.9,280.8L303.4,287.1ZM311.9,291.4L305.0,293.3L306.8,299.5ZM313.6,297.4L306.8,299.5L308.8,305.6ZM319.9,314.9L313.3,317.7L315.9,323.6Z"/>
<path fill="rgb(132,132,132)" stroke="rgb(132,132,132)" stroke-width="0.3" d="M379.1,290.6L376.3,296.6L380.8,294.6ZM380.8,294.6L378.2,300.6L382.6,298.5ZM367.7,271.3L364.0,277.0L368.8,275.6ZM368.8,275.6L365.3,281.4L370.1,279.9ZM360.9,208.5L355.8,207.6L355.0,212.3ZM360.1,213.0L355.0,212.3L354.4,217.0ZM359.0,222.2L353.9,221.7L353.5,226.5ZM358.5,231.4L353.3,231.2L353.2,236.0ZM358.4,236.0L353.2,236.0L353.3,240.8ZM358.5,240.6L353.3,240.8L353.5,245.5ZM358.7,245.2L353.5,245.5L353.9,250.3ZM359.5,254.4L354.4,255.0L355.0,259.7ZM354.4,217.0L349.0,216.3L348.5,221.2ZM353.2,236.0L347.8,236.0L347.9,240.9ZM353.5,245.5L348.1,245.8L348.5,250.8ZM354.4,255.0L349.0,255.7L349.7,260.5ZM341.5,277.7L337.1,284.4L342.9,282.8ZM344.3,287.9L340.3,294.8L346.0,292.9ZM349.7,302.7L346.3,310.0L351.8,307.6ZM351.8,307.6L348.6,314.9L354.0,312.3ZM354.0,312.3L351.0,319.8L356.3,317.0ZM338.6,289.6L334.4,296.8L340.3,294.8ZM346.3,310.0L343.0,317.6L348.6,314.9ZM326.6,293.4L320.2,295.3L322.1,301.1ZM328.4,298.9L322.1,301.1L324.1,306.7ZM330.3,304.4L324.1,306.7L326.3,312.3ZM334.8,315.1L328.7,317.9L331.2,323.3ZM337.2,320.4L331.2,323.3L333.9,328.7ZM315.7,277.8L310.3,285.4L317.0,283.7ZM317.0,283.7L311.9,291.4L318.5,289.5ZM320.2,295.3L315.6,303.3L322.1,301.1ZM324.1,306.7L319.9,314.9L326.3,312.3ZM310.3,285.4L303.4,287.1L305.0,293.3ZM315.6,303.3L308.8,305.6L311.0,311.7ZM317.7,309.1L311.0,311.7L313.3,317.7ZM322.4,320.7L315.9,323.6L318.6,329.4ZM325.0,326.3L318.6,329.4L321.5,335.2Z"/>
<path fill="rgb(138,138,138)" stroke="rgb(138,138,138)" stroke-width="0.3" d="M363.4,236.0L358.4,236.0L358.5,240.6ZM376.3,296.6L373.7,302.8L378.2,300.6ZM361.8,204.0L356.7,202.9L355.8,207.6ZM359.5,217.6L354.4,217.0L353.9,221.7ZM358.7,226.8L353.5,226.5L353.3,231.2ZM359.0,249.8L353.9,250.3L354.4,255.0ZM353.3,231.2L347.9,231.1L347.8,236.0ZM355.0,259.7L349.7,260.5L350.5,265.4ZM351.5,270.2L347.1,276.3L352.6,275.0ZM351.4,291.0L347.7,297.8L353.2,295.8ZM353.2,295.8L349.7,302.7L355.0,300.5ZM355.0,300.5L351.8,307.6L357.0,305.2ZM347.7,297.8L344.1,305.0L349.7,302.7ZM323.5,282.1L317.0,283.7L318.5,289.5ZM332.5,309.8L326.3,312.3L328.7,317.9ZM318.5,289.5L313.6,297.4L320.2,295.3Z"/>
<path fill="rgb(144,144,144)" stroke="rgb(144,144,144)" stroke-width="0.3" d="M375.2,211.1L370.6,210.3L369.9,214.5ZM370.6,210.3L365.8,209.4L365.1,213.8ZM369.3,218.8L364.5,218.2L364.0,222.6ZM368.9,223.1L364.0,222.6L363.7,227.1ZM368.5,227.4L363.7,227.1L363.5,231.5ZM368.3,236.0L363.4,236.0L363.5,240.5ZM368.3,240.3L363.5,240.5L363.7,244.9ZM369.3,253.2L364.5,253.8L365.1,258.2ZM366.7,205.0L361.8,204.0L360.9,208.5ZM365.8,209.4L360.9,208.5L360.1,213.0ZM365.1,213.8L360.1,213.0L359.5,217.6ZM364.5,218.2L359.5,217.6L359.0,222.2ZM364.0,222.6L359.0,222.2L358.7,226.8ZM363.5,231.5L358.5,231.4L358.4,236.0ZM363.5,240.5L358.5,240.6L358.7,245.2ZM363.7,244.9L358.7,245.2L359.0,249.8ZM371.4,284.1L368.3,290.1L373.0,288.3ZM373.0,288.3L370.0,294.4L374.6,292.5ZM374.6,292.5L371.8,298.6L376.3,296.6ZM360.1,259.0L355.0,259.7L355.8,264.4ZM356.7,269.1L352.6,275.0L357.8,273.7ZM345.0,266.4L339.3,267.4L340.4,272.6ZM347.1,276.3L342.9,282.8L348.4,281.3ZM322.2,276.5L315.7,277.8L317.0,283.7ZM324.9,287.8L318.5,289.5L320.2,295.3ZM314.5,271.9L307.7,273.2L308.9,279.3Z"/>
<path fill="rgb(150,150,150)" stroke="rgb(150,150,150)" stroke-width="0.3" d="M381.9,232.1L377.5,232.0L377.4,236.0ZM381.3,204.0L376.9,202.9L376.0,207.0ZM380.4,208.0L376.0,207.0L375.2,211.1ZM379.6,211.9L375.2,211.1L374.5,215.2ZM378.0,248.1L373.5,248.5L373.9,252.6ZM376.0,207.0L371.4,206.0L370.6,210.3ZM373.0,231.8L368.3,231.7L368.3,236.0ZM373.5,248.5L368.9,248.9L369.3,253.2ZM375.2,260.9L370.6,261.7L371.4,266.0ZM376.9,269.1L372.4,270.2L373.5,274.3ZM371.4,206.0L366.7,205.0L365.8,209.4ZM369.9,214.5L365.1,213.8L364.5,218.2ZM368.5,244.6L363.7,244.9L364.0,249.4ZM369.9,257.5L365.1,258.2L365.8,262.6ZM370.6,261.7L365.8,262.6L366.7,267.0ZM363.7,227.1L358.7,226.8L358.5,231.4ZM364.0,249.4L359.0,249.8L359.5,254.4ZM365.1,258.2L360.1,259.0L360.9,263.5ZM365.8,262.6L360.9,263.5L361.8,268.0ZM370.1,279.9L366.7,285.8L371.4,284.1ZM362.8,272.5L359.0,278.3L364.0,277.0ZM350.5,265.4L345.0,266.4L346.0,271.4ZM348.4,281.3L344.3,287.9L349.9,286.2ZM349.9,286.2L346.0,292.9L351.4,291.0ZM357.0,305.2L354.0,312.3L359.2,309.8ZM359.2,309.8L356.3,317.0L361.5,314.4ZM328.4,275.1L322.2,276.5L323.5,282.1ZM332.7,291.5L326.6,293.4L328.4,298.9ZM338.4,307.4L332.5,309.8L334.8,315.1Z"/>
<path fill="rgb(156,156,156)" stroke="rgb(156,156,156)" stroke-width="0.3" d="M388.8,209.7L384.7,208.9L383.9,212.7ZM388.0,213.4L383.9,212.7L383.3,216.5ZM386.9,220.9L382.7,220.4L382.3,224.3ZM386.1,232.2L381.9,232.1L381.8,236.0ZM386.1,239.8L381.9,239.9L382.0,243.8ZM386.5,247.3L382.3,247.7L382.7,251.6ZM386.9,251.1L382.7,251.6L383.3,255.5ZM385.5,205.1L381.3,204.0L380.4,208.0ZM384.7,208.9L380.4,208.0L379.6,211.9ZM382.3,224.3L378.0,223.9L377.7,227.9ZM381.9,239.9L377.5,240.0L377.7,244.1ZM382.0,243.8L377.7,244.1L378.0,248.1ZM382.3,247.7L378.0,248.1L378.4,252.1ZM382.7,251.6L378.4,252.1L379.0,256.1ZM383.9,259.3L379.6,260.1L380.4,264.0ZM386.5,270.7L382.3,271.9L383.5,275.8ZM379.0,215.9L374.5,215.2L373.9,219.4ZM378.4,219.9L373.9,219.4L373.5,223.5ZM378.0,223.9L373.5,223.5L373.2,227.7ZM377.7,227.9L373.2,227.7L373.0,231.8ZM377.5,232.0L373.0,231.8L372.9,236.0ZM377.4,236.0L372.9,236.0L373.0,240.2ZM377.7,244.1L373.2,244.3L373.5,248.5ZM378.4,252.1L373.9,252.6L374.5,256.8ZM379.0,256.1L374.5,256.8L375.2,260.9ZM381.3,268.0L376.9,269.1L378.0,273.1ZM383.5,275.8L379.2,277.1L380.4,281.1ZM387.6,287.2L383.4,288.9L385.0,292.7ZM374.5,215.2L369.9,214.5L369.3,218.8ZM373.9,219.4L369.3,218.8L368.9,223.1ZM373.5,223.5L368.9,223.1L368.5,227.4ZM373.2,227.7L368.5,227.4L368.3,231.7ZM372.9,236.0L368.3,236.0L368.3,240.3ZM373.0,240.2L368.3,240.3L368.5,244.6ZM373.2,244.3L368.5,244.6L368.9,248.9ZM373.9,252.6L369.3,253.2L369.9,257.5ZM376.0,265.0L371.4,266.0L372.4,270.2ZM383.4,288.9L379.1,290.6L380.8,294.6ZM368.3,231.7L363.5,231.5L363.4,236.0ZM368.9,248.9L364.0,249.4L364.5,253.8ZM364.5,253.8L359.5,254.4L360.1,259.0ZM360.9,263.5L355.8,264.4L356.7,269.1ZM340.4,272.6L334.5,273.8L335.7,279.1ZM334.5,273.8L328.4,275.1L329.7,280.6ZM336.4,302.1L330.3,304.4L332.5,309.8Z"/>
<path fill="rgb(162,162,162)" stroke="rgb(162,162,162)" stroke-width="0.3" d="M387.4,217.2L383.3,216.5L382.7,220.4ZM386.5,224.7L382.3,224.3L382.0,228.2ZM386.2,228.4L382.0,228.2L381.9,232.1ZM386.0,236.0L381.8,236.0L381.9,239.9ZM386.2,243.6L382.0,243.8L382.3,247.7ZM387.4,254.8L383.3,255.5L383.9,259.3ZM383.9,212.7L379.6,211.9L379.0,215.9ZM383.3,216.5L379.0,215.9L378.4,219.9ZM382.7,220.4L378.4,219.9L378.0,223.9ZM381.8,236.0L377.4,236.0L377.5,240.0ZM383.3,255.5L379.0,256.1L379.6,260.1ZM384.7,263.1L380.4,264.0L381.3,268.0ZM385.5,266.9L381.3,268.0L382.3,271.9ZM387.6,274.5L383.5,275.8L384.7,279.6ZM377.5,240.0L373.0,240.2L373.2,244.3ZM379.6,260.1L375.2,260.9L376.0,265.0ZM380.4,264.0L376.0,265.0L376.9,269.1ZM384.7,279.6L380.4,281.1L381.9,285.0ZM374.5,256.8L369.9,257.5L370.6,261.7ZM378.0,273.1L373.5,274.3L374.7,278.5ZM379.2,277.1L374.7,278.5L376.0,282.6ZM385.0,292.7L380.8,294.6L382.6,298.5ZM371.4,266.0L366.7,267.0L367.7,271.3ZM372.4,270.2L367.7,271.3L368.8,275.6ZM374.7,278.5L370.1,279.9L371.4,284.1ZM366.7,267.0L361.8,268.0L362.8,272.5ZM355.8,264.4L350.5,265.4L351.5,270.2ZM356.7,289.2L353.2,295.8L358.4,293.8ZM358.4,293.8L355.0,300.5L360.2,298.4ZM360.2,298.4L357.0,305.2L362.1,302.9ZM362.1,302.9L359.2,309.8L364.2,307.4ZM346.0,271.4L340.4,272.6L341.5,277.7ZM329.7,280.6L323.5,282.1L324.9,287.8ZM331.1,286.1L324.9,287.8L326.6,293.4ZM334.4,296.8L328.4,298.9L330.3,304.4ZM340.6,312.5L334.8,315.1L337.2,320.4ZM343.0,317.6L337.2,320.4L339.8,325.6Z"/>
<path fill="rgb(168,168,168)" stroke="rgb(168,168,168)" stroke-width="0.3" d="M388.0,258.6L383.9,259.3L384.7,263.1ZM382.0,228.2L377.7,227.9L377.5,232.0ZM382.3,271.9L378.0,273.1L379.2,277.1ZM386.1,283.4L381.9,285.0L383.4,288.9ZM380.4,281.1L376.0,282.6L377.5,286.6ZM381.9,285.0L377.5,286.6L379.1,290.6ZM373.5,274.3L368.8,275.6L370.1,279.9ZM376.0,282.6L371.4,284.1L373.0,288.3ZM377.5,286.6L373.0,288.3L374.6,292.5ZM366.7,285.8L363.4,291.9L368.3,290.1ZM357.8,273.7L353.8,279.8L359.0,278.3ZM352.6,275.0L348.4,281.3L353.8,279.8ZM355.2,284.5L351.4,291.0L356.7,289.2ZM335.7,279.1L329.7,280.6L331.1,286.1ZM337.1,284.4L331.1,286.1L332.7,291.5ZM340.3,294.8L334.4,296.8L336.4,302.1ZM342.2,299.9L336.4,302.1L338.4,307.4ZM348.6,314.9L343.0,317.6L345.5,322.7Z"/>
<path fill="rgb(174,174,174)" stroke="rgb(174,174,174)" stroke-width="0.3" d="M379.1,290.6L374.6,292.5L376.3,296.6ZM380.8,294.6L376.3,296.6L378.2,300.6ZM361.8,268.0L356.7,269.1L357.8,273.7ZM364.0,277.0L360.3,282.9L365.3,281.4ZM365.3,281.4L361.8,287.4L366.7,285.8ZM371.8,298.6L369.0,305.1L373.7,302.8ZM353.8,279.8L349.9,286.2L355.2,284.5ZM342.9,282.8L337.1,284.4L338.6,289.6ZM346.0,292.9L340.3,294.8L342.2,299.9ZM349.7,302.7L344.1,305.0L346.3,310.0ZM338.6,289.6L332.7,291.5L334.4,296.8ZM344.1,305.0L338.4,307.4L340.6,312.5ZM346.3,310.0L340.6,312.5L343.0,317.6ZM315.7,277.8L308.9,279.3L310.3,285.4ZM320.2,295.3L313.6,297.4L315.6,303.3ZM322.1,301.1L315.6,303.3L317.7,309.1ZM326.3,312.3L319.9,314.9L322.4,320.7ZM328.7,317.9L322.4,320.7L325.0,326.3ZM331.2,323.3L325.0,326.3L327.8,331.9Z"/>
<path fill="rgb(180,180,180)" stroke="rgb(180,180,180)" stroke-width="0.3" d="M367.7,271.3L362.8,272.5L364.0,277.0ZM368.8,275.6L364.0,277.0L365.3,281.4ZM368.3,290.1L365.1,296.4L370.0,294.4ZM370.0,294.4L367.0,300.7L371.8,298.6ZM341.5,277.7L335.7,279.1L337.1,284.4ZM344.3,287.9L338.6,289.6L340.3,294.8ZM351.8,307.6L346.3,310.0L348.6,314.9ZM354.0,312.3L348.6,314.9L351.0,319.8ZM317.0,283.7L310.3,285.4L311.9,291.4ZM324.1,306.7L317.7,309.1L319.9,314.9Z"/>
<path fill="rgb(186,186,186)" stroke="rgb(186,186,186)" stroke-width="0.3" d="M360.3,282.9L356.7,289.2L361.8,287.4ZM351.5,270.2L346.0,271.4L347.1,276.3ZM347.7,297.8L342.2,299.9L344.1,305.0ZM318.5,289.5L311.9,291.4L313.6,297.4Z"/>
<path fill="rgb(192,192,192)" stroke="rgb(192,192,192)" stroke-width="0.3" d="M376.3,296.6L371.8,298.6L373.7,302.8ZM359.0,278.3L355.2,284.5L360.3,282.9ZM363.4,291.9L360.2,298.4L365.1,296.4ZM367.0,300.7L364.2,307.4L369.0,305.1ZM347.1,276.3L341.5,277.7L342.9,282.8ZM351.4,291.0L346.0,292.9L347.7,297.8ZM353.2,295.8L347.7,297.8L349.7,302.7ZM355.0,300.5L349.7,302.7L351.8,307.6Z"/>
<path fill="rgb(198,198,198)" stroke="rgb(198,198,198)" stroke-width="0.3" d="M370.1,279.9L365.3,281.4L366.7,285.8ZM371.4,284.1L366.7,285.8L368.3,290.1ZM373.0,288.3L368.3,290.1L370.0,294.4ZM374.6,292.5L370.0,294.4L371.8,298.6ZM356.7,269.1L351.5,270.2L352.6,275.0ZM361.8,287.4L358.4,293.8L363.4,291.9ZM365.1,296.4L362.1,302.9L367.0,300.7ZM349.9,286.2L344.3,287.9L346.0,292.9ZM359.2,309.8L354.0,312.3L356.3,317.0Z"/>
<path fill="rgb(204,204,204)" stroke="rgb(204,204,204)" stroke-width="0.3" d="M362.8,272.5L357.8,273.7L359.0,278.3ZM348.4,281.3L342.9,282.8L344.3,287.9ZM357.0,305.2L351.8,307.6L354.0,312.3Z"/>
<path fill="rgb(222,222,222)" stroke="rgb(222,222,222)" stroke-width="0.3" d="M352.6,275.0L347.1,276.3L348.4,281.3ZM355.2,284.5L349.9,286.2L351.4,291.0ZM356.7,289.2L351.4,291.0L353.2,295.8ZM358.4,293.8L353.2,295.8L355.0,300.5ZM360.2,298.4L355.0,300.5L357.0,305.2ZM362.1,302.9L357.0,305.2L359.2,309.8Z"/>
<path fill="rgb(228,228,228)" stroke="rgb(228,228,228)" stroke-width="0.3" d="M366.7,285.8L361.8,287.4L363.4,291.9ZM357.8,273.7L352.6,275.0L353.8,279.8Z"/>
<path fill="rgb(234,234,234)" stroke="rgb(234,234,234)" stroke-width="0.3" d="M364.0,277.0L359.0,278.3L360.3,282.9ZM365.3,281.4L360.3,282.9L361.8,287.4ZM371.8,298.6L367.0,300.7L369.0,305.1ZM353.8,279.8L348.4,281.3L349.9,286.2Z"/>
<path fill="rgb(240,240,240)" stroke="rgb(240,240,240)" stroke-width="0.3" d="M368.3,290.1L363.4,291.9L365.1,296.4ZM370.0,294.4L365.1,296.4L367.0,300.7Z"/>
<path fill="rgb(252,252,252)" stroke="rgb(252,252,252)" stroke-width="0.3" d="M359.0,278.3L353.8,279.8L355.2,284.5ZM360.3,282.9L355.2,284.5L356.7,289.2ZM361.8,287.4L356.7,289.2L358.4,293.8ZM363.4,291.9L358.4,293.8L360.2,298.4ZM365.1,296.4L360.2,298.4L362.1,302.9ZM367.0,300.7L362.1,302.9L364.2,307.4Z"/>
<path fill="none" stroke="#a89c9c" stroke-width="0.6" stroke-opacity="0.8" d="M361.2,194.3L364.0,195.0L363.3,197.5M364.0,195.0L357.8,198.3M356.1,192.9L359.0,193.7L358.3,196.2M359.0,193.7L352.6,197.0M352.3,186.6L355.2,187.5L354.4,190.1M355.2,187.5L348.4,190.7M350.8,191.4L353.8,192.2L353.1,194.8M353.8,192.2L347.1,195.7M349.6,196.3L352.6,197.0L351.9,199.6M352.6,197.0L346.0,200.6M346.8,184.9L349.9,185.8L349.1,188.5M349.9,185.8L342.9,189.2M345.4,189.9L348.4,190.7L347.7,193.4M348.4,190.7L341.5,194.3M344.1,194.9L347.1,195.7L346.5,198.4M347.1,195.7L340.4,199.4M342.9,178.1L346.0,179.1L345.1,181.9M346.0,179.1L338.6,182.4M341.2,183.2L344.3,184.1L343.5,186.9M344.3,184.1L337.1,187.6M339.7,188.3L342.9,189.2L342.1,192.0M342.9,189.2L335.7,192.9M338.3,193.5L341.5,194.3L340.9,197.1M341.5,194.3L334.5,198.2M343.2,160.6L346.3,162.0L345.1,164.8M346.3,162.0L338.4,164.6M341.0,165.7L344.1,167.0L343.0,169.8M344.1,167.0L336.4,169.9M337.1,176.1L340.3,177.2L339.4,180.0M340.3,177.2L332.7,180.5M335.4,181.4L338.6,182.4L337.8,185.2M338.6,182.4L331.1,185.9M333.8,186.7L337.1,187.6L336.3,190.5M337.1,187.6L329.7,191.4M332.4,192.1L335.7,192.9L335.1,195.8M335.7,192.9L328.4,196.9M337.4,158.0L340.6,159.5L339.4,162.3M340.6,159.5L332.5,162.2M335.1,163.3L338.4,164.6L337.3,167.5M338.4,164.6L330.3,167.6M333.0,168.6L336.4,169.9L335.3,172.8M336.4,169.9L328.4,173.1M331.1,174.0L334.4,175.2L333.5,178.1M334.4,175.2L326.6,178.6M329.3,179.5L332.7,180.5L331.8,183.5M332.7,180.5L324.9,184.2M327.7,185.0L331.1,185.9L330.3,188.9M331.1,185.9L323.5,189.9M326.3,190.5L329.7,191.4L329.0,194.4M329.7,191.4L322.2,195.5M325.0,196.1L328.4,196.9L327.8,199.9M328.4,196.9L321.0,201.3M331.4,155.4L334.8,156.9L333.5,159.8M334.8,156.9L326.3,159.7M329.1,160.8L332.5,162.2L331.3,165.2M332.5,162.2L324.1,165.3M326.9,166.3L330.3,167.6L329.3,170.6M330.3,167.6L322.1,170.9M324.9,171.9L328.4,173.1L327.4,176.1M328.4,173.1L320.2,176.7M323.1,177.6L326.6,178.6L325.7,181.7M326.6,178.6L318.5,182.5M321.4,183.3L324.9,184.2L324.1,187.3M324.9,184.2L317.0,188.3M319.9,189.0L323.5,189.9L322.7,193.0M323.5,189.9L315.7,194.2M318.6,194.8L322.2,195.5L321.5,198.7M322.2,195.5L314.5,200.1M325.2,152.6L328.7,154.1L327.4,157.2M328.7,154.1L319.9,157.1M322.8,158.2L326.3,159.7L325.1,162.8M326.3,159.7L317.7,162.9M320.6,163.9L324.1,165.3L323.0,168.4M324.1,165.3L315.6,168.7M318.5,169.7L322.1,170.9L321.1,174.1M322.1,170.9L313.6,174.6M316.6,175.6L320.2,176.7L319.3,179.9M320.2,176.7L311.9,180.6M314.9,181.4L318.5,182.5L317.7,185.7M318.5,182.5L310.3,186.6M313.3,187.4L317.0,188.3L316.3,191.5M317.0,188.3L308.9,192.7M312.0,193.4L315.7,194.2L315.0,197.4M315.7,194.2L307.7,198.8M310.8,199.4L314.5,200.1L313.9,203.3M314.5,200.1L306.7,205.0M309.8,205.4L313.5,206.0L313.1,209.3M313.5,206.0L305.9,211.1M308.9,211.5L312.7,212.0L312.3,215.3M312.7,212.0L305.2,217.3M308.3,217.6L312.1,218.0L311.8,221.3M312.1,218.0L304.7,223.5M307.8,223.7L311.6,224.0L311.5,227.3M311.6,224.0L304.5,229.8M307.6,229.9L311.3,230.0L311.3,233.3M311.3,230.0L304.4,236.0M307.5,236.0L311.2,236.0L311.3,239.3M311.2,236.0L304.5,242.2M307.6,242.1L311.3,242.0L311.5,245.3M311.3,242.0L304.7,248.5M307.8,248.3L311.6,248.0L311.9,251.3M311.6,248.0L305.2,254.7M308.3,254.4L312.1,254.0L312.4,257.3M312.1,254.0L305.9,260.9M308.9,260.5L312.7,260.0L313.1,263.3M312.7,260.0L306.7,267.0M309.8,266.6L313.5,266.0L314.0,269.3M313.5,266.0L307.7,273.2M310.8,272.6L314.5,271.9L315.1,275.2M314.5,271.9L308.9,279.3M312.0,278.6L315.7,277.8L316.4,281.1M315.7,277.8L310.3,285.4M316.3,155.6L319.9,157.1L318.7,160.2M319.9,157.1L311.0,160.3M314.0,161.5L317.7,162.9L316.5,166.1M317.7,162.9L308.8,166.4M311.8,167.4L315.6,168.7L314.5,172.0M315.6,168.7L306.8,172.5M309.9,173.5L313.6,174.6L312.7,177.9M313.6,174.6L305.0,178.7M308.1,179.6L311.9,180.6L311.0,183.9M311.9,180.6L303.4,184.9M306.5,185.7L310.3,186.6L309.5,190.0M310.3,186.6L301.9,191.2M305.1,191.9L308.9,192.7L308.3,196.1M308.9,192.7L300.7,197.5M303.8,198.1L307.7,198.8L307.1,202.2M307.7,198.8L299.6,203.9M302.8,204.4L306.7,205.0L306.2,208.4M306.7,205.0L298.8,210.3M302.0,210.7L305.9,211.1L305.5,214.5M305.9,211.1L298.1,216.7M301.3,217.0L305.2,217.3L304.9,220.8M305.2,217.3L297.6,223.1M300.8,223.3L304.7,223.5L304.6,227.0M304.7,223.5L297.3,229.6M300.5,229.7L304.5,229.8L304.4,233.2M304.5,229.8L297.2,236.0M300.4,236.0L304.4,236.0L304.4,239.4M304.4,236.0L297.3,242.4M300.5,242.3L304.5,242.2L304.6,245.7M304.5,242.2L297.6,248.9M300.8,248.7L304.7,248.5L305.0,251.9M304.7,248.5L298.1,255.3M301.3,255.0L305.2,254.7L305.6,258.1M305.2,254.7L298.8,261.7M302.0,261.3L305.9,260.9L306.3,264.3M305.9,260.9L299.6,268.1M302.8,267.6L306.7,267.0L307.3,270.4M306.7,267.0L300.7,274.5M303.8,273.9L307.7,273.2L308.4,276.5M307.7,273.2L301.9,280.8M305.1,280.1L308.9,279.3L309.7,282.6M308.9,279.3L303.4,287.1M306.5,286.3L310.3,285.4L311.2,288.7M310.3,285.4L305.0,293.3M308.1,292.4L311.9,291.4L312.8,294.7M311.9,291.4L306.8,299.5M309.9,298.5L313.6,297.4L314.7,300.6M313.6,297.4L308.8,305.6M311.8,304.6L315.6,303.3L316.7,306.5M315.6,303.3L311.0,311.7M309.6,152.8L313.3,154.3L312.0,157.6M313.3,154.3L304.1,157.7M307.2,158.9L311.0,160.3L309.8,163.7M311.0,160.3L301.8,164.0M305.0,165.1L308.8,166.4L307.7,169.8M308.8,166.4L299.7,170.3M302.9,171.3L306.8,172.5L305.8,175.9M306.8,172.5L297.9,176.7M301.1,177.6L305.0,178.7L304.1,182.1M305.0,178.7L296.2,183.2M299.4,184.0L303.4,184.9L302.6,188.4M303.4,184.9L294.7,189.7M298.0,190.4L301.9,191.2L301.3,194.7M301.9,191.2L293.4,196.2M296.7,196.8L300.7,197.5L300.1,201.0M300.7,197.5L292.3,202.8M295.6,203.3L299.6,203.9L299.2,207.4M299.6,203.9L291.4,209.4M294.7,209.8L298.8,210.3L298.4,213.8M298.8,210.3L290.7,216.0M294.0,216.3L298.1,216.7L297.8,220.2M298.1,216.7L290.2,222.7M293.5,222.9L297.6,223.1L297.4,226.7M297.6,223.1L289.9,229.3M293.2,229.4L297.3,229.6L297.3,233.1M297.3,229.6L289.8,236.0M293.2,236.0L297.2,236.0L297.3,239.5M297.2,236.0L289.9,242.7M293.2,242.6L297.3,242.4L297.5,246.0M297.3,242.4L290.2,249.3M293.5,249.1L297.6,248.9L297.9,252.4M297.6,248.9L290.7,256.0M294.0,255.7L298.1,255.3L298.5,258.8M298.1,255.3L291.4,262.6M294.7,262.2L298.8,261.7L299.2,265.2M298.8,261.7L292.3,269.2M295.6,268.7L299.6,268.1L300.2,271.6M299.6,268.1L293.4,275.8M296.7,275.2L300.7,274.5L301.4,277.9M300.7,274.5L294.7,282.3M298.0,281.6L301.9,280.8L302.7,284.2M301.9,280.8L296.2,288.8M299.4,288.0L303.4,287.1L304.3,290.5M303.4,287.1L297.9,295.3M301.1,294.4L305.0,293.3L306.0,296.7M305.0,293.3L299.7,301.7M302.9,300.7L306.8,299.5L307.9,302.8M306.8,299.5L301.8,308.0M305.0,306.9L308.8,305.6L310.0,308.9M308.8,305.6L304.1,314.3M307.2,313.1L311.0,311.7L312.3,315.0M311.0,311.7L306.5,320.5M309.6,319.2L313.3,317.7L314.7,320.9M313.3,317.7L309.1,326.6M312.2,325.2L315.9,323.6L317.4,326.8M315.9,323.6L311.9,332.6M300.1,156.2L304.1,157.7L302.8,161.2M304.1,157.7L294.6,161.5M297.8,162.6L301.8,164.0L300.7,167.5M301.8,164.0L292.4,168.1M295.7,169.1L299.7,170.3L298.7,173.9M299.7,170.3L290.5,174.7M293.8,175.6L297.9,176.7L296.9,180.3M297.9,176.7L288.7,181.4M292.1,182.2L296.2,183.2L295.4,186.8M296.2,183.2L287.2,188.1M290.6,188.8L294.7,189.7L294.0,193.3M294.7,189.7L285.9,194.9M289.3,195.5L293.4,196.2L292.8,199.8M293.4,196.2L284.7,201.7M288.1,202.2L292.3,202.8L291.8,206.4M292.3,202.8L283.8,208.5M287.2,208.9L291.4,209.4L291.0,213.0M291.4,209.4L283.1,215.3M286.5,215.7L290.7,216.0L290.4,219.7M290.7,216.0L282.6,222.2M286.0,222.4L290.2,222.7L290.1,226.3M290.2,222.7L282.3,229.1M285.7,229.2L289.9,229.3L289.9,233.0M289.9,229.3L282.2,236.0M285.6,236.0L289.8,236.0L289.9,239.7M289.8,236.0L282.3,242.9M285.7,242.8L289.9,242.7L290.1,246.3M289.9,242.7L282.6,249.8M286.0,249.6L290.2,249.3L290.5,253.0M290.2,249.3L283.1,256.7M286.5,256.3L290.7,256.0L291.1,259.6M290.7,256.0L283.8,263.5M287.2,263.1L291.4,262.6L291.9,266.2M291.4,262.6L284.7,270.3M288.1,269.8L292.3,269.2L292.9,272.8M292.3,269.2L285.9,277.1M289.3,276.5L293.4,275.8L294.1,279.4M293.4,275.8L287.2,283.9M290.6,283.2L294.7,282.3L295.5,285.9M294.7,282.3L288.7,290.6M292.1,289.8L296.2,288.8L297.1,292.4M296.2,288.8L290.5,297.3M293.8,296.4L297.9,295.3L298.9,298.8M297.9,295.3L292.4,303.9M295.7,302.9L299.7,301.7L300.9,305.1M299.7,301.7L294.6,310.5M297.8,309.4L301.8,308.0L303.1,311.4M301.8,308.0L296.9,317.0M300.1,315.8L304.1,314.3L305.4,317.7M304.1,314.3L299.4,323.4M302.6,322.1L306.5,320.5L308.0,323.8M306.5,320.5L302.1,329.7M305.3,328.3L309.1,326.6L310.7,329.9M309.1,326.6L305.0,336.0M308.1,334.5L311.9,332.6L313.6,335.9M311.9,332.6L308.1,342.1M277.9,229.0L282.3,229.1L282.2,232.9M282.3,229.1L274.2,236.0M277.8,236.0L282.2,236.0L282.2,239.8M282.2,236.0L274.3,243.1M277.9,243.0L282.3,242.9L282.4,246.7M282.3,242.9L274.6,250.3M278.2,250.0L282.6,249.8L282.9,253.6M282.6,249.8L275.2,257.4M278.7,257.1L283.1,256.7L283.5,260.4M283.1,256.7L275.9,264.5M279.5,264.0L283.8,263.5L284.3,267.3M283.8,263.5L276.9,271.5M284.5,291.7L288.7,290.6L289.7,294.3M288.7,290.6L282.8,299.4M286.3,298.5L290.5,297.3L291.6,300.9M290.5,297.3L284.8,306.3M288.3,305.2L292.4,303.9L293.6,307.5M292.4,303.9L287.1,313.1M290.4,311.9L294.6,310.5L295.8,314.0M294.6,310.5L289.5,319.8M292.8,318.5L296.9,317.0L298.3,320.5M296.9,317.0L292.1,326.4M295.4,325.0L299.4,323.4L300.9,326.9M299.4,323.4L294.9,333.0M298.1,331.5L302.1,329.7L303.7,333.2M302.1,329.7L297.9,339.4M301.1,337.9L305.0,336.0L306.7,339.4M305.0,336.0L301.1,345.8M285.2,321.4L289.5,319.8L290.9,323.4M289.5,319.8L284.5,329.5M287.9,328.1L292.1,326.4L293.6,330.0M292.1,326.4L287.4,336.3M290.8,334.8L294.9,333.0L296.5,336.5M294.9,333.0L290.5,343.0"/>
<path fill="none" stroke="#c8c0c0" stroke-width="0.5" stroke-opacity="0.45" d="M346.0,216.0L349.0,216.3L348.7,219.0M349.0,216.3L343.0,220.7M345.5,221.0L348.5,221.2L348.3,223.9M348.5,221.2L342.6,225.8M345.1,226.0L348.1,226.2L348.0,228.9M348.1,226.2L342.4,230.9M344.9,231.0L347.9,231.1L347.9,233.8M347.9,231.1L342.3,236.0M344.8,236.0L347.8,236.0L347.9,238.7M347.8,236.0L342.4,241.1M344.9,241.0L347.9,240.9L348.0,243.6M347.9,240.9L342.6,246.2M345.1,246.0L348.1,245.8L348.3,248.5M348.1,245.8L343.0,251.3M342.9,200.0L346.0,200.6L345.5,203.4M346.0,200.6L339.3,204.6M341.9,205.0L345.0,205.6L344.6,208.4M345.0,205.6L338.5,209.8M341.0,210.2L344.2,210.6L343.8,213.4M344.2,210.6L337.8,215.0M340.3,215.3L343.5,215.7L343.2,218.5M343.5,215.7L337.2,220.2M339.8,220.5L343.0,220.7L342.8,223.5M343.0,220.7L336.8,225.5M339.4,225.6L342.6,225.8L342.5,228.6M342.6,225.8L336.6,230.7M339.2,230.8L342.4,230.9L342.3,233.7M342.4,230.9L336.5,236.0M339.1,236.0L342.3,236.0L342.3,238.8M342.3,236.0L336.6,241.3M339.2,241.2L342.4,241.1L342.5,243.9M342.4,241.1L336.8,246.5M339.4,246.4L342.6,246.2L342.8,249.0M342.6,246.2L337.2,251.8M339.8,251.5L343.0,251.3L343.3,254.0M343.0,251.3L337.8,257.0M340.3,256.7L343.5,256.3L343.9,259.1M343.5,256.3L338.5,262.2M341.0,261.8L344.2,261.4L344.6,264.1M344.2,261.4L339.3,267.4M341.9,267.0L345.0,266.4L345.6,269.1M345.0,266.4L340.4,272.6M342.9,272.0L346.0,271.4L346.6,274.1M346.0,271.4L341.5,277.7M344.1,277.1L347.1,276.3L347.8,279.1M347.1,276.3L342.9,282.8M337.1,198.7L340.4,199.4L339.8,202.3M340.4,199.4L333.4,203.5M336.1,204.0L339.3,204.6L338.9,207.4M339.3,204.6L332.6,208.9M335.2,209.3L338.5,209.8L338.1,212.6M338.5,209.8L331.8,214.3M334.5,214.6L337.8,215.0L337.5,217.9M337.8,215.0L331.3,219.7M333.9,219.9L337.2,220.2L337.0,223.1M337.2,220.2L330.8,225.1M333.5,225.3L336.8,225.5L336.7,228.4M336.8,225.5L330.6,230.6M333.3,230.6L336.6,230.7L336.5,233.6M336.6,230.7L330.5,236.0M333.2,236.0L336.5,236.0L336.5,238.9M336.5,236.0L330.6,241.4M333.3,241.4L336.6,241.3L336.7,244.2M336.6,241.3L330.8,246.9M333.5,246.7L336.8,246.5L337.0,249.4M336.8,246.5L331.3,252.3M333.9,252.1L337.2,251.8L337.5,254.7M337.2,251.8L331.8,257.7M334.5,257.4L337.8,257.0L338.2,259.9M337.8,257.0L332.6,263.1M335.2,262.7L338.5,262.2L338.9,265.1M338.5,262.2L333.4,268.5M336.1,268.0L339.3,267.4L339.9,270.3M339.3,267.4L334.5,273.8M337.1,273.3L340.4,272.6L341.0,275.4M340.4,272.6L335.7,279.1M338.3,278.5L341.5,277.7L342.3,280.5M341.5,277.7L337.1,284.4M339.7,283.7L342.9,282.8L343.7,285.6M342.9,282.8L338.6,289.6M341.2,288.8L344.3,287.9L345.2,290.6M344.3,287.9L340.3,294.8M342.9,293.9L346.0,292.9L346.9,295.6M346.0,292.9L342.2,299.9M344.7,299.0L347.7,297.8L348.8,300.5M347.7,297.8L344.1,305.0M331.2,197.5L334.5,198.2L333.9,201.1M334.5,198.2L327.4,202.4M330.1,202.9L333.4,203.5L333.0,206.5M333.4,203.5L326.4,208.0M329.2,208.4L332.6,208.9L332.2,211.8M332.6,208.9L325.7,213.5M328.4,213.9L331.8,214.3L331.5,217.3M331.8,214.3L325.1,219.1M327.9,219.4L331.3,219.7L331.0,222.7M331.3,219.7L324.7,224.7M327.4,224.9L330.8,225.1L330.7,228.1M330.8,225.1L324.4,230.4M327.2,230.5L330.6,230.6L330.6,233.6M330.6,230.6L324.3,236.0M327.1,236.0L330.5,236.0L330.6,239.0M330.5,236.0L324.4,241.6M327.2,241.5L330.6,241.4L330.7,244.4M330.6,241.4L324.7,247.3M327.4,247.1L330.8,246.9L331.1,249.9M330.8,246.9L325.1,252.9M327.9,252.6L331.3,252.3L331.6,255.3M331.3,252.3L325.7,258.5M328.4,258.1L331.8,257.7L332.2,260.7M331.8,257.7L326.4,264.0M329.2,263.6L332.6,263.1L333.0,266.1M332.6,263.1L327.4,269.6M330.1,269.1L333.4,268.5L334.0,271.4M333.4,268.5L328.4,275.1M331.2,274.5L334.5,273.8L335.2,276.8M334.5,273.8L329.7,280.6M332.4,279.9L335.7,279.1L336.5,282.0M335.7,279.1L331.1,286.1M333.8,285.3L337.1,284.4L337.9,287.3M337.1,284.4L332.7,291.5M335.4,290.6L338.6,289.6L339.6,292.5M338.6,289.6L334.4,296.8M337.1,295.9L340.3,294.8L341.3,297.6M340.3,294.8L336.4,302.1M339.0,301.1L342.2,299.9L343.2,302.7M342.2,299.9L338.4,307.4M341.0,306.3L344.1,305.0L345.3,307.7M344.1,305.0L340.6,312.5M343.2,311.4L346.3,310.0L347.6,312.7M346.3,310.0L343.0,317.6M323.9,201.8L327.4,202.4L326.8,205.5M327.4,202.4L320.1,207.0M322.9,207.4L326.4,208.0L326.0,211.0M326.4,208.0L319.3,212.8M322.2,213.1L325.7,213.5L325.3,216.6M325.7,213.5L318.7,218.6M321.6,218.8L325.1,219.1L324.8,222.2M325.1,219.1L318.2,224.4M321.1,224.5L324.7,224.7L324.5,227.8M324.7,224.7L318.0,230.2M320.9,230.3L324.4,230.4L324.4,233.5M324.4,230.4L317.9,236.0M320.8,236.0L324.3,236.0L324.4,239.1M324.3,236.0L318.0,241.8M320.9,241.7L324.4,241.6L324.5,244.7M324.4,241.6L318.2,247.6M321.1,247.5L324.7,247.3L324.9,250.3M324.7,247.3L318.7,253.4M321.6,253.2L325.1,252.9L325.4,255.9M325.1,252.9L319.3,259.2M322.2,258.9L325.7,258.5L326.1,261.5M325.7,258.5L320.1,265.0M322.9,264.6L326.4,264.0L326.9,267.1M326.4,264.0L321.0,270.7M323.9,270.2L327.4,269.6L328.0,272.6M327.4,269.6L322.2,276.5M325.0,275.9L328.4,275.1L329.1,278.1M328.4,275.1L323.5,282.1M326.3,281.5L329.7,280.6L330.5,283.6M329.7,280.6L324.9,287.8M327.7,287.0L331.1,286.1L332.0,289.0M331.1,286.1L326.6,293.4M329.3,292.5L332.7,291.5L333.7,294.4M332.7,291.5L328.4,298.9M331.1,298.0L334.4,296.8L335.5,299.7M334.4,296.8L330.3,304.4M333.0,303.4L336.4,302.1L337.5,305.0M336.4,302.1L332.5,309.8M335.1,308.7L338.4,307.4L339.6,310.2M338.4,307.4L334.8,315.1M337.4,314.0L340.6,312.5L341.9,315.3M340.6,312.5L337.2,320.4M339.8,319.2L343.0,317.6L344.4,320.4M343.0,317.6L339.8,325.6M317.4,200.6L321.0,201.3L320.5,204.4M321.0,201.3L313.5,206.0M316.5,206.4L320.1,207.0L319.6,210.2M320.1,207.0L312.7,212.0M315.7,212.3L319.3,212.8L319.0,215.9M319.3,212.8L312.1,218.0M315.0,218.2L318.7,218.6L318.4,221.7M318.7,218.6L311.6,224.0M314.6,224.1L318.2,224.4L318.1,227.6M318.2,224.4L311.3,230.0M314.3,230.1L318.0,230.2L317.9,233.4M318.0,230.2L311.2,236.0M314.2,236.0L317.9,236.0L317.9,239.2M317.9,236.0L311.3,242.0M314.3,241.9L318.0,241.8L318.1,245.0M318.0,241.8L311.6,248.0M314.6,247.9L318.2,247.6L318.5,250.8M318.2,247.6L312.1,254.0M315.0,253.8L318.7,253.4L319.0,256.6M318.7,253.4L312.7,260.0M315.7,259.7L319.3,259.2L319.7,262.4M319.3,259.2L313.5,266.0M316.5,265.6L320.1,265.0L320.6,268.2M320.1,265.0L314.5,271.9M317.4,271.4L321.0,270.7L321.7,273.9M321.0,270.7L315.7,277.8M318.6,277.2L322.2,276.5L322.9,279.6M322.2,276.5L317.0,283.7M319.9,283.0L323.5,282.1L324.3,285.2M323.5,282.1L318.5,289.5M321.4,288.7L324.9,287.8L325.8,290.8M324.9,287.8L320.2,295.3M323.1,294.4L326.6,293.4L327.6,296.4M326.6,293.4L322.1,301.1M324.9,300.1L328.4,298.9L329.5,301.9M328.4,298.9L324.1,306.7M326.9,305.7L330.3,304.4L331.5,307.4M330.3,304.4L326.3,312.3M329.1,311.2L332.5,309.8L333.7,312.7M332.5,309.8L328.7,317.9M331.4,316.6L334.8,315.1L336.1,318.1M334.8,315.1L331.2,323.3M333.9,322.0L337.2,320.4L338.7,323.3M337.2,320.4L333.9,328.7M313.3,284.6L317.0,283.7L317.8,286.9M317.0,283.7L311.9,291.4M314.9,290.6L318.5,289.5L319.5,292.7M318.5,289.5L313.6,297.4M316.6,296.4L320.2,295.3L321.2,298.5M320.2,295.3L315.6,303.3M318.5,302.3L322.1,301.1L323.2,304.2M322.1,301.1L317.7,309.1M320.6,308.1L324.1,306.7L325.3,309.8M324.1,306.7L319.9,314.9M322.8,313.8L326.3,312.3L327.6,315.4M326.3,312.3L322.4,320.7M325.2,319.4L328.7,317.9L330.1,320.9M328.7,317.9L325.0,326.3M327.8,325.0L331.2,323.3L332.7,326.3M331.2,323.3L327.8,331.9M314.0,310.5L317.7,309.1L318.9,312.3M317.7,309.1L313.3,317.7M316.3,316.4L319.9,314.9L321.3,318.1M319.9,314.9L315.9,323.6M318.8,322.3L322.4,320.7L323.8,323.8M322.4,320.7L318.6,329.4M321.5,328.0L325.0,326.3L326.6,329.4M325.0,326.3L321.5,335.2M314.9,331.2L318.6,329.4L320.2,332.6M318.6,329.4L314.9,338.6"/>
<path fill="none" stroke="#e0dada" stroke-width="0.6" stroke-opacity="0.6" d="M365.7,231.6L368.3,231.7L368.3,234.1M368.3,231.7L363.4,236.0M365.6,236.0L368.3,236.0L368.3,238.4M368.3,236.0L363.5,240.5M364.0,204.5L366.7,205.0L366.2,207.4M366.7,205.0L360.9,208.5M363.1,208.9L365.8,209.4L365.4,211.8M365.8,209.4L360.1,213.0M362.4,213.4L365.1,213.8L364.8,216.2M365.1,213.8L359.5,217.6M361.8,217.9L364.5,218.2L364.2,220.7M364.5,218.2L359.0,222.2M361.3,222.4L364.0,222.6L363.9,225.1M364.0,222.6L358.7,226.8M360.9,226.9L363.7,227.1L363.6,229.5M363.7,227.1L358.5,231.4M360.7,231.5L363.5,231.5L363.5,234.0M363.5,231.5L358.4,236.0M360.7,236.0L363.4,236.0L363.5,238.5M363.4,236.0L358.5,240.6M360.7,240.5L363.5,240.5L363.6,242.9M363.5,240.5L358.7,245.2M360.9,245.1L363.7,244.9L363.9,247.4M363.7,244.9L359.0,249.8M361.3,249.6L364.0,249.4L364.3,251.8M364.0,249.4L359.5,254.4M361.8,254.1L364.5,253.8L364.8,256.2M364.5,253.8L360.1,259.0M362.4,258.6L365.1,258.2L365.5,260.6M365.1,258.2L360.9,263.5M363.1,263.1L365.8,262.6L366.3,265.0M365.8,262.6L361.8,268.0M364.0,267.5L366.7,267.0L367.2,269.4M366.7,267.0L362.8,272.5M365.0,272.0L367.7,271.3L368.3,273.7M367.7,271.3L364.0,277.0M360.0,198.8L362.8,199.5L362.3,202.0M362.8,199.5L356.7,202.9M359.0,203.4L361.8,204.0L361.3,206.5M361.8,204.0L355.8,207.6M358.1,208.0L360.9,208.5L360.5,211.0M360.9,208.5L355.0,212.3M357.3,212.6L360.1,213.0L359.8,215.6M360.1,213.0L354.4,217.0M356.7,217.3L359.5,217.6L359.3,220.1M359.5,217.6L353.9,221.7M356.2,221.9L359.0,222.2L358.9,224.7M359.0,222.2L353.5,226.5M355.8,226.6L358.7,226.8L358.6,229.3M358.7,226.8L353.3,231.2M355.6,231.3L358.5,231.4L358.5,233.9M358.5,231.4L353.2,236.0M355.6,236.0L358.4,236.0L358.5,238.5M358.4,236.0L353.3,240.8M355.6,240.7L358.5,240.6L358.6,243.1M358.5,240.6L353.5,245.5M355.8,245.4L358.7,245.2L358.9,247.7M358.7,245.2L353.9,250.3M356.2,250.1L359.0,249.8L359.3,252.3M359.0,249.8L354.4,255.0M356.7,254.7L359.5,254.4L359.9,256.9M359.5,254.4L355.0,259.7M357.3,259.4L360.1,259.0L360.6,261.5M360.1,259.0L355.8,264.4M358.1,264.0L360.9,263.5L361.4,266.0M360.9,263.5L356.7,269.1M359.0,268.6L361.8,268.0L362.4,270.5M361.8,268.0L357.8,273.7M360.0,273.2L362.8,272.5L363.5,275.0M362.8,272.5L359.0,278.3M361.2,277.7L364.0,277.0L364.7,279.4M364.0,277.0L360.3,282.9M362.6,282.2L365.3,281.4L366.1,283.8M365.3,281.4L361.8,287.4M364.0,286.7L366.7,285.8L367.6,288.2M366.7,285.8L363.4,291.9M354.9,197.6L357.8,198.3L357.2,200.8M357.8,198.3L351.5,201.8M353.8,202.3L356.7,202.9L356.2,205.5M356.7,202.9L350.5,206.6M352.9,207.0L355.8,207.6L355.4,210.2M355.8,207.6L349.7,211.5M352.1,211.8L355.0,212.3L354.7,214.9M355.0,212.3L349.0,216.3M351.4,216.6L354.4,217.0L354.1,219.6M354.4,217.0L348.5,221.2M350.9,221.5L353.9,221.7L353.7,224.3M353.9,221.7L348.1,226.2M350.6,226.3L353.5,226.5L353.4,229.1M353.5,226.5L347.9,231.1M350.3,231.1L353.3,231.2L353.3,233.9M353.3,231.2L347.8,236.0M350.3,236.0L353.2,236.0L353.3,238.6M353.2,236.0L347.9,240.9M350.3,240.9L353.3,240.8L353.4,243.4M353.3,240.8L348.1,245.8M350.6,245.7L353.5,245.5L353.7,248.1M353.5,245.5L348.5,250.8M350.9,250.5L353.9,250.3L354.1,252.9M353.9,250.3L349.0,255.7M351.4,255.4L354.4,255.0L354.7,257.6M354.4,255.0L349.7,260.5M352.1,260.2L355.0,259.7L355.4,262.3M355.0,259.7L350.5,265.4M352.9,265.0L355.8,264.4L356.3,267.0M355.8,264.4L351.5,270.2M353.8,269.7L356.7,269.1L357.3,271.7M356.7,269.1L352.6,275.0M354.9,274.4L357.8,273.7L358.4,276.3M357.8,273.7L353.8,279.8M356.1,279.1L359.0,278.3L359.7,280.9M359.0,278.3L355.2,284.5M357.5,283.8L360.3,282.9L361.1,285.4M360.3,282.9L356.7,289.2M359.0,288.4L361.8,287.4L362.7,289.9M361.8,287.4L358.4,293.8M360.6,293.0L363.4,291.9L364.4,294.4M363.4,291.9L360.2,298.4M362.4,297.5L365.1,296.4L366.2,298.8M365.1,296.4L362.1,302.9M364.3,301.9L367.0,300.7L368.1,303.1M367.0,300.7L364.2,307.4M348.5,201.1L351.5,201.8L350.9,204.4M351.5,201.8L345.0,205.6M347.5,206.1L350.5,206.6L350.1,209.3M350.5,206.6L344.2,210.6M346.7,211.0L349.7,211.5L349.3,214.2M349.7,211.5L343.5,215.7M345.5,251.0L348.5,250.8L348.8,253.4M348.5,250.8L343.5,256.3M346.0,256.0L349.0,255.7L349.4,258.3M349.0,255.7L344.2,261.4M346.7,261.0L349.7,260.5L350.1,263.2M349.7,260.5L345.0,266.4M347.5,265.9L350.5,265.4L351.0,268.0M350.5,265.4L346.0,271.4M348.5,270.9L351.5,270.2L352.1,272.9M351.5,270.2L347.1,276.3M349.6,275.7L352.6,275.0L353.2,277.6M352.6,275.0L348.4,281.3M350.8,280.6L353.8,279.8L354.6,282.4M353.8,279.8L349.9,286.2M352.3,285.4L355.2,284.5L356.0,287.1M355.2,284.5L351.4,291.0M353.8,290.2L356.7,289.2L357.6,291.7M356.7,289.2L353.2,295.8M355.5,294.9L358.4,293.8L359.4,296.3M358.4,293.8L355.0,300.5M357.3,299.6L360.2,298.4L361.2,300.9M360.2,298.4L357.0,305.2M359.3,304.2L362.1,302.9L363.3,305.4M362.1,302.9L359.2,309.8M345.4,282.1L348.4,281.3L349.2,284.0M348.4,281.3L344.3,287.9M346.8,287.1L349.9,286.2L350.7,288.8M349.9,286.2L346.0,292.9M348.4,292.0L351.4,291.0L352.4,293.6M351.4,291.0L347.7,297.8M350.2,296.9L353.2,295.8L354.2,298.4M353.2,295.8L349.7,302.7M352.1,301.7L355.0,300.5L356.1,303.1M355.0,300.5L351.8,307.6M354.1,306.5L357.0,305.2L358.2,307.7M357.0,305.2L354.0,312.3M356.3,311.2L359.2,309.8L360.4,312.3M359.2,309.8L356.3,317.0M346.6,304.0L349.7,302.7L350.8,305.4M349.7,302.7L346.3,310.0M348.7,308.9L351.8,307.6L353.0,310.2M351.8,307.6L348.6,314.9M351.0,313.8L354.0,312.3L355.3,314.9M354.0,312.3L351.0,319.8M345.5,316.4L348.6,314.9L349.9,317.6M348.6,314.9L345.5,322.7"/>
<path fill="none" stroke="#fff" stroke-width="0.7" stroke-opacity="0.8" d="M386.5,209.3L388.8,209.7L388.4,211.8M388.8,209.7L383.9,212.7M385.8,213.0L388.0,213.4L387.7,215.5M388.0,213.4L383.3,216.5M385.1,216.8L387.4,217.2L387.1,219.2M387.4,217.2L382.7,220.4M384.6,220.6L386.9,220.9L386.7,223.0M386.9,220.9L382.3,224.3M384.2,224.5L386.5,224.7L386.4,226.7M386.5,224.7L382.0,228.2M383.9,228.3L386.2,228.4L386.1,230.5M386.2,228.4L381.9,232.1M383.7,232.2L386.1,232.2L386.0,234.3M386.1,232.2L381.8,236.0M383.7,236.0L386.0,236.0L386.0,238.1M386.0,236.0L381.9,239.9M383.7,239.8L386.1,239.8L386.2,241.9M386.1,239.8L382.0,243.8M383.9,243.7L386.2,243.6L386.4,245.6M386.2,243.6L382.3,247.7M384.2,247.5L386.5,247.3L386.7,249.4M386.5,247.3L382.7,251.6M384.6,251.4L386.9,251.1L387.2,253.1M386.9,251.1L383.3,255.5M385.1,255.2L387.4,254.8L387.8,256.9M387.4,254.8L383.9,259.3M385.8,259.0L388.0,258.6L388.4,260.6M388.0,258.6L384.7,263.1M383.2,204.5L385.5,205.1L385.1,207.1M385.5,205.1L380.4,208.0M382.3,208.4L384.7,208.9L384.2,211.0M384.7,208.9L379.6,211.9M381.5,212.3L383.9,212.7L383.6,214.8M383.9,212.7L379.0,215.9M380.9,216.2L383.3,216.5L383.0,218.7M383.3,216.5L378.4,219.9M380.4,220.1L382.7,220.4L382.5,222.5M382.7,220.4L378.0,223.9M379.9,224.1L382.3,224.3L382.2,226.4M382.3,224.3L377.7,227.9M379.6,228.0L382.0,228.2L381.9,230.3M382.0,228.2L377.5,232.0M379.5,232.0L381.9,232.1L381.8,234.2M381.9,232.1L377.4,236.0M379.4,236.0L381.8,236.0L381.8,238.1M381.8,236.0L377.5,240.0M379.5,240.0L381.9,239.9L382.0,242.1M381.9,239.9L377.7,244.1M379.6,244.0L382.0,243.8L382.2,245.9M382.0,243.8L378.0,248.1M379.9,247.9L382.3,247.7L382.6,249.8M382.3,247.7L378.4,252.1M380.4,251.9L382.7,251.6L383.0,253.7M382.7,251.6L379.0,256.1M380.9,255.8L383.3,255.5L383.6,257.6M383.3,255.5L379.6,260.1M381.5,259.7L383.9,259.3L384.3,261.4M383.9,259.3L380.4,264.0M382.3,263.6L384.7,263.1L385.1,265.2M384.7,263.1L381.3,268.0M383.2,267.5L385.5,266.9L386.1,269.0M385.5,266.9L382.3,271.9M384.2,271.4L386.5,270.7L387.1,272.8M386.5,270.7L383.5,275.8M385.3,275.2L387.6,274.5L388.3,276.5M387.6,274.5L384.7,279.6M378.9,203.4L381.3,204.0L380.8,206.2M381.3,204.0L376.0,207.0M378.0,207.4L380.4,208.0L380.0,210.1M380.4,208.0L375.2,211.1M377.2,211.5L379.6,211.9L379.3,214.1M379.6,211.9L374.5,215.2M376.5,215.5L379.0,215.9L378.7,218.1M379.0,215.9L373.9,219.4M376.0,219.6L378.4,219.9L378.2,222.1M378.4,219.9L373.5,223.5M375.5,223.7L378.0,223.9L377.8,226.1M378.0,223.9L373.2,227.7M375.2,227.8L377.7,227.9L377.6,230.1M377.7,227.9L373.0,231.8M375.0,231.9L377.5,232.0L377.5,234.2M377.5,232.0L372.9,236.0M375.0,236.0L377.4,236.0L377.5,238.2M377.4,236.0L373.0,240.2M375.0,240.1L377.5,240.0L377.6,242.3M377.5,240.0L373.2,244.3M375.2,244.2L377.7,244.1L377.9,246.3M377.7,244.1L373.5,248.5M375.5,248.3L378.0,248.1L378.2,250.3M378.0,248.1L373.9,252.6M376.0,252.4L378.4,252.1L378.7,254.3M378.4,252.1L374.5,256.8M376.5,256.5L379.0,256.1L379.3,258.3M379.0,256.1L375.2,260.9M377.2,260.5L379.6,260.1L380.1,262.3M379.6,260.1L376.0,265.0M378.0,264.6L380.4,264.0L380.9,266.2M380.4,264.0L376.9,269.1M378.9,268.6L381.3,268.0L381.9,270.1M381.3,268.0L378.0,273.1M379.9,272.6L382.3,271.9L382.9,274.0M382.3,271.9L379.2,277.1M381.1,276.5L383.5,275.8L384.1,277.9M383.5,275.8L380.4,281.1M382.4,280.4L384.7,279.6L385.5,281.7M384.7,279.6L381.9,285.0M383.8,284.3L386.1,283.4L386.9,285.5M386.1,283.4L383.4,288.9M385.3,288.1L387.6,287.2L388.4,289.2M387.6,287.2L385.0,292.7M373.5,206.5L376.0,207.0L375.6,209.3M376.0,207.0L370.6,210.3M372.7,210.6L375.2,211.1L374.8,213.4M375.2,211.1L369.9,214.5M372.0,214.8L374.5,215.2L374.2,217.5M374.5,215.2L369.3,218.8M371.4,219.0L373.9,219.4L373.7,221.6M373.9,219.4L368.9,223.1M370.9,223.3L373.5,223.5L373.3,225.8M373.5,223.5L368.5,227.4M370.6,227.5L373.2,227.7L373.1,230.0M373.2,227.7L368.3,231.7M370.4,231.8L373.0,231.8L373.0,234.1M373.0,231.8L368.3,236.0M370.4,236.0L372.9,236.0L373.0,238.3M372.9,236.0L368.3,240.3M370.4,240.2L373.0,240.2L373.1,242.5M373.0,240.2L368.5,244.6M370.6,244.5L373.2,244.3L373.4,246.6M373.2,244.3L368.9,248.9M370.9,248.7L373.5,248.5L373.7,250.8M373.5,248.5L369.3,253.2M371.4,253.0L373.9,252.6L374.2,254.9M373.9,252.6L369.9,257.5M372.0,257.2L374.5,256.8L374.9,259.0M374.5,256.8L370.6,261.7M372.7,261.4L375.2,260.9L375.6,263.1M375.2,260.9L371.4,266.0M373.5,265.5L376.0,265.0L376.5,267.2M376.0,265.0L372.4,270.2M374.4,269.7L376.9,269.1L377.5,271.3M376.9,269.1L373.5,274.3M375.5,273.8L378.0,273.1L378.6,275.3M378.0,273.1L374.7,278.5M376.7,277.9L379.2,277.1L379.9,279.3M379.2,277.1L376.0,282.6M378.0,281.9L380.4,281.1L381.2,283.2M380.4,281.1L377.5,286.6M379.5,285.9L381.9,285.0L382.7,287.1M381.9,285.0L379.1,290.6M381.0,289.8L383.4,288.9L384.3,291.0M383.4,288.9L380.8,294.6M382.7,293.8L385.0,292.7L386.0,294.8M385.0,292.7L382.6,298.5M368.8,205.5L371.4,206.0L371.0,208.4M371.4,206.0L365.8,209.4M368.0,209.8L370.6,210.3L370.2,212.6M370.6,210.3L365.1,213.8M367.3,214.1L369.9,214.5L369.6,216.9M369.9,214.5L364.5,218.2M366.7,218.5L369.3,218.8L369.1,221.2M369.3,218.8L364.0,222.6M366.2,222.8L368.9,223.1L368.7,225.4M368.9,223.1L363.7,227.1M365.9,227.2L368.5,227.4L368.4,229.8M368.5,227.4L363.5,231.5M365.7,240.4L368.3,240.3L368.4,242.7M368.3,240.3L363.7,244.9M365.9,244.8L368.5,244.6L368.7,247.0M368.5,244.6L364.0,249.4M366.2,249.2L368.9,248.9L369.1,251.3M368.9,248.9L364.5,253.8M366.7,253.5L369.3,253.2L369.6,255.6M369.3,253.2L365.1,258.2M367.3,257.9L369.9,257.5L370.3,259.8M369.9,257.5L365.8,262.6M368.0,262.2L370.6,261.7L371.1,264.1M370.6,261.7L366.7,267.0M368.8,266.5L371.4,266.0L372.0,268.3M371.4,266.0L367.7,271.3M369.8,270.8L372.4,270.2L373.0,272.5M372.4,270.2L368.8,275.6M370.9,275.0L373.5,274.3L374.1,276.6M373.5,274.3L370.1,279.9M372.1,279.3L374.7,278.5L375.4,280.7M374.7,278.5L371.4,284.1M373.5,283.4L376.0,282.6L376.8,284.8M376.0,282.6L373.0,288.3M375.0,287.6L377.5,286.6L378.4,288.8M377.5,286.6L374.6,292.5M376.6,291.7L379.1,290.6L380.0,292.8M379.1,290.6L376.3,296.6M378.3,295.7L380.8,294.6L381.8,296.8M380.8,294.6L378.2,300.6M366.2,276.4L368.8,275.6L369.5,278.0M368.8,275.6L365.3,281.4M367.4,280.7L370.1,279.9L370.8,282.2M370.1,279.9L366.7,285.8M368.8,285.0L371.4,284.1L372.3,286.4M371.4,284.1L368.3,290.1M370.4,289.3L373.0,288.3L373.9,290.6M373.0,288.3L370.0,294.4M372.0,293.5L374.6,292.5L375.6,294.7M374.6,292.5L371.8,298.6M373.8,297.7L376.3,296.6L377.4,298.8M376.3,296.6L373.7,302.8M365.6,291.1L368.3,290.1L369.2,292.5M368.3,290.1L365.1,296.4M367.3,295.5L370.0,294.4L371.0,296.7M370.0,294.4L367.0,300.7M369.2,299.8L371.8,298.6L372.8,300.9M371.8,298.6L369.0,305.1"/>
<polygon fill="#000" points="321.5,267 327,264 332,263.5 334,266.5 339.7,267.5 339,276 336.5,282 333,283 331,279 322.5,277.5"/>
<polygon fill="#000" points="357,249.5 359,250.5 355,258 353,257.5"/>
<polygon fill="#484646" points="353,257.5 355,258 347,268.5 345,267.5"/>
<path stroke="#fff" stroke-width="1" fill="none" shape-rendering="crispEdges" d="M377,209.5h1M378,209.5h1M383,209.5h1M374,210.5h1M379,210.5h1M376,211.5h1M377,211.5h1M381,211.5h1M376,212.5h1M377,212.5h1M370,213.5h1M376,213.5h1M378,213.5h1M376,214.5h1M378,214.5h1M380,215.5h1M381,215.5h1M362,216.5h1M379,216.5h1M372,217.5h1M368,218.5h1M372,219.5h1M373,219.5h1M381,219.5h1M366,220.5h1M377,220.5h1M381,220.5h1M365,221.5h1M379,221.5h1M380,222.5h1M381,222.5h1M380,223.5h1M376,224.5h1M381,224.5h1M383,224.5h1M375,225.5h1M381,225.5h1M370,226.5h1M363,227.5h1M371,227.5h1M375,227.5h1M379,227.5h1M383,227.5h1M368,228.5h1M380,228.5h1M368,229.5h1M381,229.5h1M372,230.5h1M374,230.5h1M378,230.5h1M382,230.5h1M371,231.5h1M378,231.5h1M381,231.5h1M377,232.5h1M366,233.5h1M374,233.5h1M375,233.5h1M376,233.5h1M381,233.5h1M375,234.5h1M381,234.5h1M367,235.5h1M371,235.5h1M373,235.5h1M376,235.5h1M382,235.5h1M365,236.5h1M372,236.5h1M374,236.5h1M366,237.5h1M370,238.5h1M375,238.5h1M376,238.5h1M381,238.5h1M370,239.5h1M377,239.5h1M378,239.5h1M383,239.5h1M369,240.5h1M378,240.5h1M380,240.5h1M381,240.5h1M382,240.5h1M375,241.5h1M377,241.5h1M364,242.5h1M379,242.5h1M383,242.5h1M381,243.5h1M383,243.5h1M370,244.5h1M377,244.5h1M373,245.5h1M367,246.5h1M373,246.5h1M383,246.5h1M369,247.5h1M382,247.5h1M383,247.5h1M374,248.5h1M382,248.5h1M383,248.5h1M371,249.5h1M375,249.5h1M378,249.5h1M379,249.5h1M383,249.5h1M383,250.5h1M369,251.5h1M378,251.5h1M381,251.5h1M366,252.5h1M371,253.5h1M375,253.5h1M377,253.5h1M372,254.5h1M371,255.5h1M378,255.5h1M381,255.5h1M382,255.5h1M383,255.5h1M366,256.5h1M371,256.5h1M376,256.5h1M370,257.5h1M375,257.5h1M381,258.5h1M374,259.5h1M383,260.5h1M370,261.5h1M371,261.5h1M370,262.5h1M373,262.5h1M382,262.5h1M368,263.5h1M373,263.5h1M381,263.5h1M366,264.5h1M369,264.5h1M375,264.5h1M377,264.5h1M379,265.5h1M381,265.5h1M372,266.5h1M376,266.5h1M379,266.5h1M380,266.5h1M383,266.5h1M369,267.5h1M370,267.5h1M380,267.5h1M366,268.5h1M377,268.5h1M381,268.5h1M372,269.5h1M376,269.5h1M379,269.5h1M380,269.5h1M382,269.5h1M383,269.5h1M367,270.5h1M377,270.5h1M380,270.5h1M375,271.5h1M372,272.5h1M377,273.5h1M383,273.5h1M371,274.5h1M381,274.5h1M382,274.5h1M362,276.5h1M375,277.5h1M376,277.5h1M383,278.5h1M382,279.5h1M363,280.5h1M377,280.5h1M378,280.5h1M380,280.5h1M381,280.5h1M382,280.5h1M364,281.5h1M371,281.5h1M377,281.5h1M380,282.5h1M382,282.5h1M374,283.5h1M377,283.5h1M379,283.5h1M382,283.5h1M382,284.5h1M373,285.5h1M378,285.5h1M381,285.5h1M367,286.5h1M379,286.5h1M383,286.5h1M376,287.5h1M380,287.5h1M383,287.5h1M372,288.5h1M381,288.5h1M373,289.5h1M378,289.5h1M377,290.5h1M381,290.5h1M383,290.5h1M368,291.5h1M371,291.5h1M375,291.5h1M380,291.5h1M365,292.5h1M374,293.5h1M379,293.5h1M380,293.5h1M382,293.5h1M380,294.5h1M381,294.5h1M369,295.5h1M372,296.5h1M376,296.5h1M370,297.5h1M372,297.5h1"/>
</g>
<g clip-path="url(#cr)">
<polygon fill="#777272" points="412.7,117.4 419.5,118.8 427.3,124.6 439.0,131.4 448.7,137.3 458.4,146.0 468.0,153.8 477.9,161.6 487.6,170.4 497.4,181.0 507.0,191.8 514.9,203.5 520.7,217.0 524.6,228.8 530.5,238.7 532.4,254.3 529.5,266.0 522.7,273.7 516.0,279.5 501.0,285.0 488.0,286.5 474.0,287.0 460.0,285.0 446.7,279.6 435.0,279.6 419.5,282.5 405.8,285.4 400.0,286.4 390.7,288.4 383.0,293.0 383.0,209.0 384.2,202.3 390.8,195.7 385.9,190.7 395.8,185.0 390.8,181.7 397.4,175.0 392.5,171.8 385.0,168.5 395.8,169.0 405.7,168.5 415.5,164.4 420.5,161.0 416.4,157.0 423.8,157.0 425.4,151.2 424.6,143.0 423.0,136.4 418.0,131.4 419.7,126.5 415.5,121.5"/>
<polygon filter="url(#bl)" fill="#c8c8c8" fill-opacity="0.7" points="492,250 502,236 514,226 528,240 533,256 529,268 519,277 502,279 486,272 482,262"/>
<polygon fill="#2c2a2a" points="452,272.5 470,274 490,277.5 512,281 512,292 452,292"/>
<polygon fill="#999595" points="450.0,272.2 453.0,272.6 463.0,282.2 460.0,282.2"/>
<polygon fill="#999595" points="456.4,273.2 459.4,273.6 469.4,283.2 466.4,283.2"/>
<polygon fill="#999595" points="462.8,274.2 465.8,274.6 475.8,284.2 472.8,284.2"/>
<polygon fill="#999595" points="469.2,275.2 472.2,275.6 482.2,285.2 479.2,285.2"/>
<polygon fill="#999595" points="475.6,276.2 478.6,276.6 488.6,286.2 485.6,286.2"/>
<polygon fill="#999595" points="482.0,277.2 485.0,277.6 495.0,287.2 492.0,287.2"/>
<polygon fill="#999595" points="488.4,278.2 491.4,278.6 501.4,288.2 498.4,288.2"/>
<polygon fill="#999595" points="494.8,279.2 497.8,279.6 507.8,289.2 504.8,289.2"/>
<polygon fill="#999595" points="501.2,280.2 504.2,280.6 514.2,290.2 511.2,290.2"/>
<polygon fill="#999595" points="507.6,281.2 510.6,281.6 520.6,291.2 517.6,291.2"/>
<path d="M452,274 L468,272.3" stroke="#1c1c1c" stroke-width="1.2" fill="none"/>
<path stroke="#fff" stroke-width="1" fill="none" shape-rendering="crispEdges" d="M434,128.5h1M434,133.5h1M434,134.5h1M440,136.5h1M444,137.5h1M433,138.5h1M436,138.5h1M441,138.5h1M452,140.5h1M434,141.5h1M437,141.5h1M446,141.5h1M449,141.5h1M433,144.5h1M447,144.5h1M450,144.5h1M456,144.5h1M444,145.5h1M440,146.5h1M444,146.5h1M452,147.5h1M455,147.5h1M437,148.5h1M436,149.5h1M450,150.5h1M462,150.5h1M449,152.5h1M425,153.5h1M434,153.5h1M443,153.5h1M467,153.5h1M458,154.5h1M447,156.5h1M465,156.5h1M430,157.5h1M438,157.5h1M444,157.5h1M432,158.5h1M436,158.5h1M446,158.5h1M450,158.5h1M458,158.5h1M467,158.5h1M419,159.5h1M421,159.5h1M425,159.5h1M433,159.5h1M464,159.5h1M471,159.5h1M423,161.5h1M445,161.5h1M440,162.5h1M447,162.5h1M457,162.5h1M461,162.5h1M426,163.5h1M432,163.5h1M451,163.5h1M454,163.5h1M468,163.5h1M472,163.5h1M476,163.5h1M418,164.5h1M421,164.5h1M460,164.5h1M413,165.5h1M432,165.5h1M449,165.5h1M452,165.5h1M458,165.5h1M467,165.5h1M471,165.5h1M473,165.5h1M475,165.5h1M479,165.5h1M425,166.5h1M435,167.5h1M441,167.5h1M462,167.5h1M467,167.5h1M479,167.5h1M481,167.5h1M483,167.5h1M411,168.5h1M414,168.5h1M417,168.5h1M420,168.5h1M428,168.5h1M444,168.5h1M450,168.5h1M464,168.5h1M470,168.5h1M477,168.5h1M484,168.5h1M460,169.5h1M473,169.5h1M410,170.5h1M428,170.5h1M473,170.5h1M414,171.5h1M422,171.5h1M435,171.5h1M437,171.5h1M443,171.5h1M458,171.5h1M463,171.5h1M466,171.5h1M469,171.5h1M473,171.5h1M477,171.5h1M479,171.5h2M483,171.5h1M486,171.5h1M489,171.5h1M425,172.5h1M481,172.5h1M484,172.5h1M408,173.5h1M423,173.5h1M438,173.5h1M474,173.5h1M477,173.5h2M487,173.5h1M414,174.5h1M429,174.5h1M431,174.5h1M441,174.5h1M445,174.5h1M450,174.5h1M459,174.5h1M463,174.5h1M470,174.5h3M481,174.5h1M483,174.5h1M486,174.5h3M420,175.5h1M465,175.5h1M468,175.5h1M472,175.5h1M474,175.5h1M479,175.5h1M485,175.5h1M489,175.5h1M408,176.5h1M425,176.5h1M432,176.5h1M437,176.5h1M446,176.5h1M457,176.5h1M479,176.5h1M481,176.5h1M485,176.5h2M490,176.5h2M413,177.5h1M416,177.5h1M419,177.5h1M443,177.5h1M449,177.5h1M451,177.5h1M455,177.5h1M464,177.5h1M466,177.5h1M470,177.5h1M477,177.5h1M481,177.5h1M486,177.5h1M489,177.5h1M492,177.5h1M441,178.5h1M474,178.5h1M488,178.5h1M491,178.5h2M483,179.5h1M487,179.5h1M492,179.5h2M495,179.5h1M405,180.5h1M410,180.5h1M421,180.5h1M428,180.5h1M433,180.5h1M438,180.5h1M444,180.5h1M447,180.5h1M454,180.5h2M462,180.5h1M468,180.5h1M471,180.5h1M474,180.5h2M481,180.5h1M486,180.5h1M488,180.5h3M495,180.5h2M426,181.5h1M435,181.5h1M473,181.5h1M477,181.5h1M481,181.5h1M491,181.5h1M496,181.5h1M407,182.5h1M409,182.5h1M440,182.5h1M473,182.5h1M483,182.5h1M489,182.5h1M491,182.5h1M495,182.5h2M404,183.5h1M414,183.5h1M416,183.5h1M429,183.5h1M446,183.5h1M449,183.5h1M459,183.5h1M461,183.5h1M463,183.5h1M468,183.5h1M470,183.5h1M476,183.5h1M478,183.5h1M480,183.5h1M484,183.5h2M487,183.5h1M490,183.5h1M492,183.5h1M494,183.5h1M498,183.5h2M478,184.5h1M489,184.5h1M491,184.5h2M494,184.5h3M498,184.5h1M425,185.5h1M431,185.5h1M447,185.5h1M465,185.5h1M474,185.5h1M485,185.5h2M490,185.5h1M496,185.5h1M498,185.5h3M405,186.5h1M417,186.5h1M434,186.5h1M440,186.5h1M445,186.5h1M450,186.5h1M456,186.5h1M468,186.5h1M471,186.5h1M474,186.5h1M476,186.5h1M479,186.5h1M485,186.5h2M488,186.5h1M493,186.5h1M499,186.5h1M501,186.5h1M402,187.5h1M414,187.5h1M430,187.5h1M460,187.5h1M484,187.5h3M488,187.5h1M491,187.5h1M497,187.5h1M500,187.5h1M428,188.5h1M446,188.5h1M479,188.5h1M486,188.5h3M497,188.5h1M499,188.5h1M501,188.5h1M407,189.5h1M409,189.5h1M412,189.5h1M417,189.5h1M431,189.5h1M435,189.5h1M440,189.5h1M448,189.5h1M455,189.5h1M457,189.5h1M461,189.5h1M463,189.5h1M466,189.5h1M470,189.5h1M474,189.5h2M482,189.5h2M487,189.5h1M491,189.5h4M497,189.5h2M500,189.5h4M398,190.5h1M442,190.5h1M480,190.5h1M485,190.5h1M488,190.5h1M491,190.5h1M494,190.5h2M498,190.5h1M502,190.5h1M420,191.5h1M438,191.5h1M440,191.5h1M479,191.5h1M488,191.5h1M490,191.5h1M497,191.5h1M499,191.5h1M501,191.5h2M504,191.5h3M393,192.5h1M395,192.5h1M411,192.5h1M423,192.5h1M426,192.5h1M430,192.5h1M447,192.5h1M451,192.5h1M462,192.5h1M466,192.5h1M471,192.5h1M477,192.5h1M480,192.5h1M486,192.5h1M488,192.5h2M491,192.5h1M495,192.5h1M497,192.5h2M501,192.5h1M503,192.5h4M399,193.5h1M403,193.5h1M408,193.5h1M460,193.5h1M467,193.5h1M473,193.5h1M483,193.5h3M488,193.5h1M493,193.5h1M495,193.5h4M500,193.5h1M502,193.5h3M395,194.5h1M398,194.5h1M415,194.5h1M447,194.5h1M454,194.5h1M470,194.5h1M484,194.5h1M493,194.5h3M497,194.5h1M499,194.5h3M505,194.5h4M392,195.5h1M404,195.5h1M407,195.5h1M422,195.5h1M426,195.5h1M428,195.5h1M434,195.5h1M436,195.5h1M440,195.5h1M444,195.5h1M448,195.5h1M451,195.5h1M460,195.5h1M467,195.5h1M469,195.5h1M473,195.5h1M476,195.5h1M485,195.5h2M488,195.5h2M491,195.5h2M495,195.5h1M498,195.5h4M503,195.5h1M506,195.5h2M401,196.5h1M411,196.5h1M413,196.5h1M458,196.5h1M465,196.5h1M478,196.5h1M482,196.5h1M488,196.5h1M493,196.5h1M495,196.5h1M499,196.5h2M504,196.5h2M508,196.5h1M421,197.5h1M444,197.5h1M468,197.5h1M474,197.5h1M487,197.5h2M492,197.5h2M495,197.5h1M498,197.5h1M504,197.5h2M507,197.5h1M509,197.5h2M390,198.5h1M393,198.5h1M396,198.5h1M403,198.5h1M406,198.5h2M411,198.5h1M414,198.5h1M426,198.5h1M432,198.5h1M439,198.5h1M447,198.5h1M457,198.5h1M462,198.5h1M477,198.5h1M479,198.5h1M483,198.5h1M488,198.5h1M491,198.5h2M494,198.5h1M497,198.5h2M500,198.5h1M503,198.5h2M510,198.5h2M388,199.5h1M392,199.5h1M398,199.5h1M417,199.5h1M450,199.5h1M466,199.5h1M471,199.5h1M486,199.5h2M489,199.5h1M496,199.5h1M499,199.5h1M501,199.5h2M506,199.5h2M510,199.5h1M393,200.5h1M402,200.5h1M404,200.5h1M407,200.5h2M411,200.5h1M413,200.5h1M416,200.5h1M424,200.5h1M428,200.5h1M442,200.5h1M472,200.5h1M479,200.5h1M491,200.5h1M495,200.5h2M501,200.5h1M503,200.5h10M385,201.5h1M387,201.5h1M389,201.5h1M392,201.5h1M395,201.5h1M398,201.5h1M403,201.5h1M409,201.5h1M422,201.5h1M437,201.5h1M449,201.5h1M455,201.5h1M458,201.5h1M476,201.5h1M483,201.5h2M487,201.5h1M491,201.5h2M496,201.5h1M499,201.5h1M501,201.5h6M508,201.5h6M387,202.5h1M398,202.5h1M400,202.5h1M405,202.5h1M408,202.5h1M410,202.5h1M452,202.5h1M460,202.5h1M467,202.5h1M469,202.5h1M475,202.5h1M486,202.5h2M500,202.5h1M503,202.5h2M507,202.5h5M513,202.5h1M384,203.5h1M414,203.5h1M426,203.5h1M429,203.5h1M477,203.5h1M490,203.5h1M496,203.5h3M501,203.5h1M503,203.5h3M507,203.5h2M510,203.5h5M385,204.5h1M390,204.5h1M395,204.5h2M399,204.5h1M402,204.5h1M406,204.5h2M410,204.5h1M416,204.5h1M421,204.5h1M433,204.5h1M435,204.5h1M449,204.5h1M456,204.5h1M458,204.5h1M461,204.5h1M464,204.5h1M472,204.5h1M474,204.5h1M479,204.5h1M483,204.5h1M495,204.5h1M497,204.5h1M499,204.5h1M501,204.5h2M505,204.5h7M513,204.5h2M386,205.5h1M393,205.5h1M396,205.5h2M401,205.5h1M406,205.5h1M411,205.5h1M423,205.5h1M442,205.5h2M486,205.5h1M493,205.5h1M498,205.5h2M504,205.5h1M506,205.5h3M513,205.5h1M515,205.5h1M390,206.5h2M394,206.5h2M398,206.5h2M401,206.5h1M407,206.5h1M409,206.5h2M462,206.5h1M469,206.5h1M482,206.5h1M489,206.5h3M493,206.5h1M495,206.5h1M503,206.5h5M511,206.5h2M514,206.5h1M383,207.5h1M389,207.5h2M393,207.5h1M395,207.5h1M398,207.5h1M401,207.5h1M403,207.5h1M406,207.5h1M411,207.5h1M413,207.5h1M419,207.5h1M422,207.5h1M428,207.5h1M432,207.5h1M437,207.5h1M443,207.5h1M452,207.5h1M479,207.5h1M481,207.5h1M485,207.5h1M494,207.5h1M496,207.5h2M501,207.5h3M507,207.5h6M514,207.5h2M383,208.5h1M385,208.5h2M389,208.5h2M392,208.5h1M401,208.5h1M404,208.5h1M415,208.5h1M449,208.5h1M463,208.5h1M467,208.5h1M476,208.5h1M500,208.5h1M503,208.5h1M505,208.5h2M508,208.5h4M514,208.5h3M385,209.5h1M387,209.5h1M389,209.5h1M395,209.5h1M399,209.5h1M402,209.5h1M411,209.5h1M420,209.5h1M444,209.5h1M462,209.5h1M465,209.5h1M484,209.5h1M501,209.5h1M503,209.5h2M506,209.5h1M508,209.5h1M510,209.5h1M513,209.5h4M387,210.5h1M390,210.5h1M392,210.5h1M396,210.5h2M400,210.5h1M404,210.5h1M412,210.5h1M422,210.5h1M426,210.5h1M429,210.5h1M448,210.5h1M453,210.5h1M470,210.5h1M476,210.5h1M480,210.5h1M485,210.5h1M488,210.5h1M492,210.5h1M496,210.5h1M498,210.5h1M502,210.5h6M509,210.5h2M513,210.5h4M383,211.5h1M399,211.5h1M402,211.5h1M405,211.5h1M408,211.5h1M414,211.5h1M417,211.5h1M498,211.5h1M503,211.5h2M507,211.5h1M510,211.5h1M512,211.5h3M385,212.5h2M392,212.5h1M394,212.5h1M406,212.5h2M409,212.5h1M440,212.5h1M452,212.5h1M483,212.5h1M494,212.5h1M496,212.5h1M502,212.5h2M507,212.5h1M509,212.5h1M511,212.5h1M513,212.5h1M516,212.5h1M518,212.5h1M384,213.5h1M386,213.5h1M393,213.5h1M396,213.5h1M400,213.5h3M404,213.5h1M407,213.5h1M413,213.5h1M419,213.5h1M430,213.5h1M434,213.5h1M450,213.5h1M459,213.5h1M469,213.5h1M474,213.5h1M476,213.5h1M479,213.5h1M488,213.5h1M491,213.5h1M494,213.5h1M500,213.5h1M505,213.5h1M509,213.5h1M511,213.5h2M514,213.5h3M518,213.5h1M383,214.5h1M386,214.5h1M388,214.5h2M392,214.5h2M399,214.5h1M407,214.5h2M416,214.5h1M460,214.5h1M467,214.5h1M485,214.5h1M498,214.5h1M500,214.5h2M504,214.5h1M507,214.5h1M509,214.5h8M387,215.5h1M391,215.5h1M398,215.5h1M404,215.5h1M406,215.5h1M408,215.5h1M411,215.5h1M450,215.5h1M462,215.5h1M466,215.5h1M472,215.5h1M491,215.5h1M496,215.5h1M499,215.5h1M505,215.5h1M507,215.5h1M511,215.5h3M516,215.5h2M383,216.5h1M385,216.5h1M387,216.5h1M389,216.5h1M392,216.5h1M395,216.5h1M397,216.5h1M400,216.5h4M406,216.5h1M408,216.5h1M410,216.5h2M414,216.5h1M420,216.5h1M426,216.5h1M432,216.5h1M441,216.5h1M445,216.5h1M447,216.5h1M457,216.5h1M467,216.5h1M475,216.5h1M480,216.5h1M483,216.5h1M486,216.5h1M490,216.5h1M495,216.5h1M498,216.5h1M502,216.5h1M504,216.5h3M509,216.5h1M512,216.5h8M387,217.5h1M390,217.5h1M392,217.5h1M397,217.5h1M399,217.5h1M403,217.5h1M408,217.5h1M439,217.5h1M453,217.5h1M477,217.5h1M498,217.5h1M501,217.5h1M508,217.5h4M517,217.5h3M382,218.5h2M386,218.5h1M398,218.5h1M408,218.5h1M458,218.5h1M473,218.5h1M485,218.5h1M498,218.5h1M501,218.5h1M510,218.5h5M518,218.5h4M387,219.5h1M389,219.5h1M391,219.5h2M394,219.5h2M401,219.5h1M407,219.5h2M411,219.5h2M418,219.5h1M422,219.5h1M437,219.5h1M439,219.5h1M443,219.5h1M452,219.5h1M467,219.5h1M477,219.5h1M488,219.5h1M491,219.5h1M493,219.5h1M497,219.5h1M501,219.5h2M505,219.5h2M508,219.5h6M515,219.5h1M517,219.5h1M520,219.5h2M383,220.5h2M392,220.5h1M395,220.5h1M401,220.5h1M403,220.5h1M409,220.5h1M411,220.5h1M413,220.5h1M416,220.5h1M424,220.5h1M429,220.5h2M449,220.5h1M456,220.5h1M465,220.5h1M470,220.5h1M479,220.5h1M494,220.5h1M507,220.5h1M509,220.5h1M511,220.5h1M517,220.5h3M521,220.5h1M397,221.5h1M401,221.5h2M404,221.5h1M407,221.5h1M414,221.5h1M463,221.5h1M487,221.5h1M495,221.5h1M501,221.5h2M506,221.5h5M514,221.5h3M518,221.5h2M521,221.5h1M384,222.5h1M390,222.5h3M394,222.5h1M396,222.5h1M399,222.5h1M401,222.5h1M403,222.5h4M412,222.5h1M420,222.5h1M424,222.5h1M426,222.5h1M428,222.5h1M432,222.5h1M436,222.5h1M438,222.5h1M444,222.5h1M447,222.5h1M449,222.5h1M452,222.5h1M457,222.5h1M465,222.5h1M468,222.5h1M471,222.5h2M474,222.5h1M476,222.5h1M480,222.5h1M483,222.5h1M489,222.5h1M498,222.5h1M501,222.5h1M504,222.5h2M507,222.5h1M512,222.5h3M516,222.5h3M520,222.5h2M383,223.5h1M385,223.5h1M388,223.5h1M390,223.5h1M398,223.5h1M404,223.5h1M409,223.5h1M441,223.5h1M447,223.5h1M454,223.5h1M456,223.5h1M459,223.5h1M463,223.5h1M474,223.5h1M486,223.5h1M488,223.5h1M491,223.5h3M495,223.5h1M498,223.5h1M503,223.5h1M508,223.5h2M511,223.5h3M516,223.5h1M519,223.5h1M522,223.5h1M387,224.5h1M392,224.5h1M397,224.5h1M410,224.5h1M440,224.5h1M444,224.5h3M453,224.5h1M459,224.5h1M465,224.5h1M471,224.5h1M479,224.5h2M485,224.5h1M489,224.5h2M499,224.5h1M503,224.5h1M506,224.5h2M512,224.5h1M514,224.5h5M387,225.5h1M389,225.5h1M392,225.5h1M395,225.5h1M402,225.5h1M404,225.5h1M406,225.5h2M413,225.5h1M415,225.5h1M419,225.5h1M425,225.5h1M428,225.5h1M432,225.5h1M458,225.5h1M462,225.5h1M466,225.5h1M471,225.5h1M473,225.5h1M477,225.5h1M479,225.5h1M481,225.5h1M486,225.5h1M490,225.5h1M492,225.5h1M494,225.5h1M497,225.5h1M501,225.5h1M505,225.5h2M509,225.5h1M512,225.5h4M518,225.5h1M520,225.5h2M384,226.5h1M386,226.5h1M389,226.5h1M397,226.5h1M405,226.5h2M435,226.5h1M449,226.5h1M454,226.5h1M470,226.5h2M481,226.5h1M488,226.5h1M493,226.5h1M497,226.5h3M505,226.5h1M509,226.5h1M512,226.5h3M516,226.5h1M518,226.5h1M523,226.5h1M385,227.5h1M387,227.5h1M390,227.5h1M394,227.5h1M399,227.5h1M403,227.5h3M407,227.5h1M409,227.5h1M420,227.5h1M456,227.5h1M459,227.5h1M482,227.5h1M487,227.5h1M493,227.5h1M495,227.5h2M498,227.5h1M504,227.5h1M507,227.5h1M509,227.5h2M512,227.5h1M517,227.5h3M521,227.5h3M389,228.5h1M394,228.5h3M400,228.5h1M402,228.5h1M405,228.5h2M410,228.5h1M414,228.5h1M418,228.5h1M424,228.5h1M439,228.5h1M442,228.5h1M444,228.5h1M446,228.5h1M468,228.5h1M470,228.5h1M474,228.5h1M477,228.5h1M481,228.5h2M486,228.5h1M493,228.5h1M495,228.5h1M498,228.5h1M500,228.5h1M506,228.5h1M511,228.5h1M513,228.5h1M516,228.5h1M518,228.5h1M522,228.5h3M383,229.5h1M387,229.5h2M390,229.5h3M395,229.5h1M401,229.5h2M407,229.5h2M429,229.5h1M449,229.5h1M454,229.5h1M462,229.5h2M466,229.5h1M488,229.5h1M492,229.5h1M496,229.5h1M502,229.5h1M507,229.5h2M510,229.5h1M512,229.5h1M515,229.5h1M517,229.5h2M522,229.5h2M382,230.5h2M385,230.5h1M387,230.5h1M391,230.5h1M393,230.5h2M398,230.5h1M400,230.5h1M402,230.5h3M407,230.5h1M448,230.5h1M462,230.5h1M469,230.5h1M472,230.5h1M483,230.5h2M491,230.5h1M494,230.5h1M504,230.5h1M512,230.5h1M516,230.5h2M521,230.5h2M524,230.5h1M390,231.5h3M396,231.5h2M401,231.5h2M404,231.5h2M416,231.5h1M444,231.5h3M448,231.5h1M453,231.5h1M455,231.5h1M458,231.5h1M461,231.5h1M465,231.5h1M470,231.5h1M473,231.5h1M477,231.5h1M479,231.5h1M483,231.5h1M488,231.5h1M493,231.5h1M497,231.5h1M499,231.5h1M501,231.5h1M504,231.5h1M507,231.5h1M509,231.5h2M513,231.5h1M518,231.5h6M385,232.5h1M394,232.5h1M396,232.5h1M403,232.5h1M407,232.5h1M409,232.5h1M412,232.5h1M467,232.5h1M470,232.5h1M482,232.5h1M487,232.5h1M493,232.5h3M500,232.5h2M504,232.5h1M513,232.5h1M515,232.5h1M520,232.5h6M393,233.5h1M397,233.5h1M402,233.5h1M404,233.5h2M409,233.5h1M462,233.5h1M471,233.5h1M487,233.5h3M491,233.5h1M499,233.5h1M503,233.5h2M508,233.5h1M510,233.5h1M513,233.5h2M518,233.5h2M522,233.5h2M525,233.5h2M384,234.5h1M387,234.5h1M390,234.5h2M395,234.5h1M397,234.5h1M399,234.5h1M402,234.5h1M411,234.5h1M414,234.5h1M441,234.5h1M450,234.5h1M452,234.5h1M455,234.5h2M459,234.5h1M466,234.5h1M468,234.5h1M473,234.5h1M477,234.5h1M479,234.5h1M484,234.5h1M487,234.5h1M489,234.5h2M494,234.5h1M497,234.5h1M499,234.5h2M503,234.5h1M506,234.5h1M510,234.5h1M513,234.5h1M516,234.5h1M518,234.5h2M521,234.5h2M525,234.5h1M527,234.5h1M389,235.5h1M399,235.5h1M405,235.5h1M407,235.5h1M417,235.5h1M447,235.5h1M468,235.5h1M480,235.5h1M483,235.5h1M488,235.5h1M492,235.5h1M494,235.5h1M501,235.5h1M504,235.5h1M506,235.5h3M512,235.5h2M515,235.5h2M519,235.5h1M521,235.5h1M523,235.5h1M526,235.5h1M528,235.5h1M383,236.5h1M386,236.5h1M389,236.5h1M392,236.5h1M397,236.5h1M402,236.5h1M404,236.5h1M407,236.5h1M454,236.5h1M459,236.5h1M466,236.5h1M471,236.5h1M476,236.5h1M481,236.5h1M484,236.5h1M486,236.5h1M492,236.5h1M497,236.5h2M509,236.5h3M516,236.5h2M520,236.5h1M522,236.5h1M524,236.5h2M528,236.5h1M383,237.5h1M389,237.5h1M392,237.5h2M395,237.5h1M399,237.5h1M403,237.5h3M414,237.5h1M446,237.5h1M449,237.5h1M452,237.5h1M461,237.5h1M467,237.5h1M473,237.5h1M476,237.5h1M478,237.5h1M481,237.5h2M488,237.5h1M494,237.5h1M496,237.5h1M498,237.5h2M503,237.5h1M506,237.5h1M512,237.5h1M515,237.5h4M521,237.5h1M524,237.5h1M526,237.5h2M529,237.5h1M389,238.5h1M392,238.5h2M396,238.5h3M401,238.5h1M404,238.5h1M410,238.5h1M415,238.5h1M419,238.5h1M463,238.5h1M474,238.5h1M480,238.5h1M483,238.5h1M485,238.5h1M490,238.5h1M492,238.5h1M494,238.5h1M504,238.5h1M512,238.5h2M517,238.5h1M524,238.5h2M527,238.5h3M392,239.5h1M395,239.5h1M397,239.5h1M399,239.5h3M406,239.5h1M408,239.5h2M418,239.5h1M449,239.5h1M453,239.5h1M457,239.5h1M482,239.5h1M484,239.5h1M489,239.5h1M499,239.5h1M502,239.5h1M516,239.5h1M519,239.5h1M522,239.5h1M524,239.5h7M385,240.5h1M387,240.5h1M389,240.5h1M393,240.5h1M400,240.5h1M402,240.5h1M404,240.5h1M406,240.5h1M411,240.5h1M414,240.5h1M447,240.5h1M454,240.5h1M456,240.5h1M459,240.5h1M462,240.5h1M465,240.5h1M469,240.5h1M474,240.5h1M476,240.5h2M480,240.5h1M483,240.5h1M486,240.5h1M490,240.5h2M496,240.5h1M498,240.5h3M502,240.5h1M504,240.5h1M508,240.5h4M513,240.5h1M515,240.5h2M518,240.5h1M521,240.5h2M524,240.5h2M527,240.5h2M530,240.5h1M383,241.5h2M386,241.5h1M389,241.5h1M393,241.5h1M400,241.5h1M408,241.5h1M445,241.5h2M463,241.5h1M471,241.5h1M485,241.5h2M489,241.5h1M495,241.5h1M497,241.5h1M515,241.5h4M522,241.5h3M528,241.5h1M530,241.5h1M388,242.5h2M391,242.5h1M396,242.5h3M400,242.5h1M402,242.5h1M446,242.5h1M455,242.5h1M464,242.5h1M476,242.5h1M494,242.5h1M496,242.5h1M499,242.5h1M501,242.5h1M506,242.5h1M512,242.5h1M514,242.5h2M517,242.5h1M521,242.5h1M523,242.5h5M530,242.5h1M384,243.5h3M392,243.5h1M399,243.5h1M404,243.5h1M407,243.5h1M409,243.5h1M440,243.5h1M442,243.5h1M449,243.5h1M461,243.5h1M467,243.5h1M471,243.5h1M473,243.5h1M477,243.5h1M482,243.5h1M488,243.5h1M492,243.5h2M497,243.5h2M503,243.5h1M506,243.5h1M508,243.5h2M512,243.5h1M517,243.5h1M519,243.5h4M527,243.5h1M530,243.5h1M386,244.5h2M401,244.5h2M409,244.5h1M414,244.5h1M452,244.5h1M456,244.5h1M458,244.5h1M480,244.5h1M485,244.5h1M487,244.5h1M499,244.5h1M506,244.5h1M508,244.5h1M512,244.5h2M516,244.5h1M519,244.5h1M521,244.5h1M523,244.5h5M529,244.5h2M385,245.5h1M392,245.5h1M402,245.5h1M404,245.5h1M407,245.5h2M410,245.5h1M426,245.5h1M448,245.5h1M458,245.5h1M462,245.5h2M466,245.5h1M468,245.5h1M478,245.5h1M480,245.5h1M486,245.5h1M495,245.5h1M503,245.5h3M507,245.5h1M510,245.5h1M517,245.5h1M523,245.5h4M528,245.5h3M383,246.5h1M386,246.5h1M390,246.5h1M393,246.5h1M396,246.5h2M399,246.5h1M402,246.5h1M405,246.5h1M414,246.5h1M418,246.5h1M447,246.5h1M450,246.5h1M452,246.5h1M456,246.5h1M458,246.5h1M466,246.5h1M469,246.5h1M472,246.5h1M475,246.5h1M477,246.5h1M482,246.5h2M486,246.5h1M490,246.5h1M492,246.5h1M495,246.5h1M498,246.5h2M503,246.5h1M505,246.5h2M509,246.5h1M512,246.5h1M517,246.5h1M520,246.5h1M524,246.5h1M526,246.5h1M528,246.5h1M385,247.5h1M395,247.5h1M399,247.5h1M403,247.5h1M432,247.5h1M442,247.5h1M452,247.5h1M464,247.5h1M466,247.5h1M468,247.5h1M471,247.5h1M483,247.5h1M489,247.5h1M493,247.5h1M500,247.5h2M507,247.5h1M510,247.5h1M512,247.5h1M514,247.5h1M520,247.5h4M525,247.5h1M527,247.5h1M529,247.5h2M384,248.5h2M390,248.5h1M393,248.5h1M404,248.5h2M441,248.5h1M453,248.5h1M463,248.5h1M466,248.5h2M471,248.5h2M480,248.5h1M483,248.5h1M488,248.5h1M490,248.5h1M493,248.5h1M506,248.5h1M510,248.5h1M513,248.5h1M515,248.5h1M519,248.5h1M522,248.5h1M526,248.5h2M529,248.5h3M383,249.5h1M385,249.5h1M392,249.5h1M394,249.5h2M397,249.5h1M399,249.5h1M401,249.5h1M404,249.5h1M407,249.5h1M410,249.5h1M443,249.5h1M446,249.5h1M448,249.5h1M450,249.5h1M455,249.5h1M458,249.5h1M461,249.5h1M464,249.5h2M467,249.5h1M470,249.5h1M475,249.5h1M479,249.5h1M481,249.5h1M483,249.5h1M486,249.5h1M488,249.5h1M491,249.5h1M495,249.5h1M497,249.5h1M499,249.5h1M501,249.5h1M503,249.5h1M511,249.5h1M514,249.5h1M518,249.5h8M527,249.5h5M386,250.5h1M397,250.5h1M403,250.5h1M417,250.5h2M471,250.5h1M473,250.5h1M482,250.5h1M488,250.5h1M496,250.5h1M505,250.5h1M509,250.5h1M512,250.5h2M526,250.5h1M529,250.5h2M386,251.5h1M388,251.5h2M391,251.5h1M402,251.5h1M404,251.5h2M411,251.5h1M413,251.5h1M484,251.5h1M486,251.5h1M490,251.5h1M493,251.5h1M498,251.5h1M501,251.5h1M505,251.5h1M512,251.5h1M514,251.5h1M518,251.5h1M520,251.5h3M524,251.5h2M527,251.5h1M529,251.5h2M385,252.5h2M390,252.5h1M394,252.5h1M396,252.5h1M398,252.5h3M402,252.5h1M407,252.5h1M442,252.5h1M445,252.5h1M447,252.5h1M453,252.5h1M456,252.5h1M458,252.5h1M464,252.5h1M468,252.5h1M472,252.5h1M474,252.5h1M476,252.5h1M483,252.5h1M486,252.5h1M492,252.5h4M497,252.5h2M500,252.5h2M507,252.5h1M510,252.5h1M512,252.5h1M515,252.5h1M519,252.5h2M523,252.5h1M525,252.5h1M529,252.5h4M387,253.5h1M392,253.5h1M394,253.5h1M399,253.5h1M404,253.5h3M420,253.5h1M447,253.5h1M450,253.5h1M462,253.5h1M474,253.5h1M477,253.5h1M479,253.5h2M485,253.5h1M488,253.5h2M494,253.5h1M501,253.5h1M504,253.5h2M517,253.5h2M523,253.5h1M530,253.5h2M383,254.5h1M386,254.5h1M388,254.5h1M392,254.5h1M395,254.5h1M400,254.5h1M403,254.5h2M410,254.5h1M467,254.5h1M483,254.5h2M492,254.5h1M494,254.5h1M497,254.5h2M501,254.5h1M507,254.5h1M512,254.5h1M519,254.5h5M525,254.5h4M530,254.5h2M383,255.5h2M388,255.5h2M392,255.5h1M397,255.5h1M400,255.5h1M402,255.5h2M405,255.5h1M407,255.5h1M415,255.5h1M419,255.5h1M441,255.5h1M446,255.5h1M450,255.5h1M459,255.5h2M464,255.5h1M467,255.5h1M470,255.5h1M472,255.5h2M476,255.5h1M482,255.5h1M484,255.5h1M488,255.5h2M492,255.5h3M498,255.5h1M500,255.5h1M504,255.5h2M510,255.5h1M514,255.5h1M518,255.5h3M524,255.5h2M529,255.5h3M386,256.5h1M390,256.5h1M395,256.5h1M397,256.5h1M399,256.5h1M404,256.5h1M452,256.5h1M455,256.5h1M477,256.5h1M479,256.5h1M499,256.5h1M512,256.5h2M517,256.5h2M520,256.5h2M525,256.5h1M528,256.5h1M530,256.5h2M386,257.5h2M389,257.5h1M391,257.5h1M393,257.5h1M395,257.5h1M399,257.5h1M402,257.5h1M404,257.5h1M416,257.5h1M447,257.5h2M451,257.5h1M470,257.5h1M476,257.5h2M485,257.5h1M490,257.5h1M492,257.5h1M504,257.5h1M508,257.5h4M515,257.5h2M522,257.5h2M525,257.5h5M531,257.5h1M384,258.5h1M388,258.5h3M394,258.5h1M397,258.5h1M399,258.5h1M402,258.5h1M405,258.5h1M408,258.5h1M410,258.5h1M415,258.5h1M446,258.5h1M450,258.5h1M456,258.5h1M458,258.5h2M468,258.5h1M481,258.5h2M489,258.5h3M495,258.5h1M501,258.5h1M507,258.5h1M514,258.5h1M521,258.5h1M524,258.5h1M526,258.5h1M528,258.5h1M530,258.5h1M397,259.5h1M400,259.5h1M405,259.5h1M441,259.5h1M448,259.5h1M453,259.5h1M463,259.5h1M465,259.5h1M467,259.5h1M474,259.5h1M479,259.5h2M484,259.5h1M486,259.5h2M494,259.5h1M496,259.5h2M500,259.5h2M510,259.5h1M516,259.5h1M518,259.5h2M526,259.5h2M383,260.5h2M390,260.5h1M394,260.5h1M399,260.5h3M416,260.5h1M433,260.5h1M449,260.5h2M461,260.5h1M471,260.5h1M488,260.5h2M497,260.5h1M502,260.5h1M507,260.5h1M511,260.5h1M522,260.5h1M527,260.5h2M383,261.5h1M386,261.5h1M389,261.5h2M392,261.5h1M397,261.5h1M404,261.5h1M408,261.5h1M411,261.5h1M414,261.5h1M419,261.5h1M441,261.5h1M443,261.5h1M446,261.5h1M452,261.5h2M455,261.5h1M462,261.5h1M467,261.5h1M469,261.5h1M473,261.5h1M476,261.5h1M478,261.5h2M485,261.5h1M488,261.5h2M491,261.5h4M497,261.5h2M500,261.5h1M506,261.5h2M509,261.5h1M511,261.5h1M515,261.5h1M518,261.5h1M520,261.5h1M522,261.5h1M524,261.5h4M529,261.5h2M387,262.5h1M389,262.5h1M392,262.5h1M395,262.5h1M397,262.5h1M458,262.5h1M461,262.5h1M464,262.5h1M466,262.5h1M473,262.5h1M475,262.5h1M482,262.5h3M491,262.5h1M493,262.5h1M509,262.5h3M513,262.5h3M520,262.5h1M522,262.5h1M524,262.5h1M526,262.5h1M529,262.5h1M384,263.5h2M395,263.5h2M399,263.5h1M408,263.5h1M417,263.5h1M450,263.5h1M453,263.5h1M457,263.5h1M467,263.5h1M476,263.5h1M479,263.5h1M488,263.5h1M498,263.5h1M504,263.5h1M510,263.5h1M512,263.5h1M514,263.5h1M516,263.5h1M518,263.5h2M521,263.5h1M525,263.5h1M527,263.5h3M384,264.5h4M390,264.5h2M393,264.5h1M398,264.5h3M403,264.5h1M405,264.5h1M420,264.5h1M442,264.5h1M445,264.5h1M447,264.5h1M454,264.5h1M460,264.5h2M464,264.5h1M468,264.5h1M471,264.5h1M474,264.5h2M481,264.5h4M486,264.5h1M492,264.5h2M495,264.5h1M497,264.5h1M501,264.5h2M504,264.5h1M507,264.5h1M511,264.5h2M515,264.5h9M525,264.5h4M384,265.5h1M386,265.5h1M389,265.5h2M394,265.5h1M396,265.5h1M460,265.5h1M479,265.5h2M486,265.5h1M489,265.5h2M492,265.5h1M504,265.5h1M510,265.5h3M516,265.5h1M522,265.5h1M526,265.5h2M529,265.5h1M387,266.5h1M394,266.5h3M405,266.5h1M408,266.5h1M416,266.5h1M419,266.5h1M446,266.5h1M454,266.5h1M459,266.5h2M470,266.5h1M473,266.5h1M476,266.5h1M481,266.5h1M492,266.5h2M496,266.5h2M502,266.5h1M504,266.5h1M508,266.5h1M513,266.5h2M516,266.5h1M519,266.5h1M521,266.5h2M525,266.5h2M528,266.5h1M383,267.5h1M385,267.5h2M388,267.5h1M394,267.5h1M398,267.5h1M400,267.5h1M402,267.5h2M406,267.5h1M410,267.5h1M413,267.5h1M441,267.5h2M448,267.5h1M456,267.5h1M458,267.5h1M463,267.5h2M468,267.5h1M479,267.5h1M482,267.5h1M487,267.5h1M494,267.5h2M497,267.5h1M499,267.5h2M506,267.5h1M509,267.5h2M512,267.5h2M515,267.5h1M518,267.5h2M521,267.5h2M525,267.5h3M382,268.5h1M388,268.5h1M392,268.5h1M397,268.5h1M400,268.5h1M437,268.5h1M452,268.5h1M461,268.5h1M471,268.5h1M473,268.5h1M480,268.5h4M486,268.5h1M488,268.5h1M499,268.5h1M501,268.5h1M504,268.5h1M513,268.5h1M515,268.5h3M519,268.5h6M526,268.5h1M384,269.5h2M388,269.5h1M393,269.5h1M395,269.5h2M404,269.5h1M447,269.5h1M452,269.5h1M457,269.5h2M474,269.5h1M476,269.5h1M482,269.5h1M493,269.5h1M499,269.5h3M505,269.5h1M507,269.5h3M511,269.5h1M515,269.5h2M520,269.5h6M383,270.5h2M388,270.5h1M390,270.5h2M396,270.5h1M399,270.5h1M403,270.5h2M409,270.5h1M415,270.5h1M417,270.5h1M430,270.5h2M443,270.5h1M448,270.5h1M462,270.5h1M464,270.5h1M468,270.5h1M471,270.5h1M477,270.5h1M479,270.5h1M486,270.5h1M489,270.5h1M494,270.5h1M506,270.5h1M509,270.5h1M511,270.5h1M513,270.5h1M517,270.5h1M520,270.5h4M526,270.5h1M390,271.5h1M394,271.5h1M399,271.5h1M411,271.5h1M442,271.5h1M483,271.5h1M489,271.5h1M492,271.5h1M501,271.5h2M504,271.5h1M515,271.5h5M521,271.5h4M387,272.5h1M392,272.5h1M394,272.5h2M398,272.5h1M413,272.5h1M470,272.5h1M477,272.5h1M481,272.5h1M484,272.5h1M497,272.5h1M510,272.5h1M512,272.5h1M515,272.5h2M518,272.5h1M520,272.5h3M388,273.5h1M392,273.5h1M394,273.5h1M398,273.5h1M400,273.5h1M404,273.5h1M408,273.5h1M447,273.5h1M467,273.5h1M473,273.5h1M476,273.5h2M479,273.5h1M486,273.5h2M492,273.5h1M494,273.5h1M496,273.5h2M499,273.5h2M503,273.5h1M507,273.5h1M509,273.5h5M516,273.5h1M518,273.5h1M522,273.5h1M382,274.5h1M384,274.5h1M386,274.5h1M389,274.5h1M393,274.5h1M398,274.5h1M401,274.5h1M406,274.5h1M415,274.5h1M455,274.5h1M481,274.5h1M485,274.5h1M501,274.5h1M506,274.5h1M515,274.5h3M519,274.5h2M388,275.5h1M390,275.5h2M394,275.5h3M398,275.5h1M401,275.5h2M474,275.5h1M488,275.5h1M497,275.5h1M504,275.5h1M506,275.5h1M509,275.5h1M511,275.5h1M516,275.5h1M519,275.5h1M383,276.5h1M385,276.5h2M388,276.5h1M401,276.5h2M404,276.5h1M407,276.5h1M418,276.5h1M420,276.5h1M423,276.5h1M441,276.5h1M444,276.5h1M446,276.5h1M488,276.5h3M494,276.5h3M500,276.5h2M505,276.5h3M509,276.5h4M516,276.5h1M393,277.5h1M395,277.5h1M397,277.5h2M414,277.5h1M492,277.5h1M498,277.5h1M507,277.5h1M509,277.5h1M515,277.5h1M517,277.5h1M384,278.5h1M386,278.5h1M403,278.5h1M419,278.5h1M448,278.5h1M460,278.5h1M500,278.5h1M503,278.5h1M509,278.5h1M515,278.5h2M384,279.5h1M387,279.5h3M392,279.5h3M399,279.5h1M401,279.5h1M403,279.5h1M407,279.5h1M410,279.5h1M416,279.5h1M425,279.5h1M443,279.5h1M445,279.5h1M452,279.5h1M455,279.5h1M477,279.5h1M484,279.5h1M493,279.5h1M506,279.5h1M509,279.5h3M513,279.5h3M384,280.5h3M389,280.5h1M391,280.5h1M401,280.5h1M440,280.5h1M384,281.5h1M387,281.5h1M394,281.5h1M402,281.5h1M411,281.5h1M492,281.5h1M385,282.5h1M387,282.5h1M389,282.5h1M393,282.5h1M395,282.5h1M398,282.5h1M404,282.5h1M414,282.5h1M416,282.5h1M507,282.5h1M393,283.5h1M397,283.5h1M408,283.5h1M504,283.5h1M386,284.5h1M396,284.5h1M384,285.5h1M386,285.5h1M392,285.5h1M395,285.5h2M398,285.5h1M400,285.5h1M402,285.5h1M404,285.5h1M467,285.5h1M479,285.5h1M486,285.5h1M489,285.5h1M491,285.5h1M383,286.5h1M389,286.5h1M391,286.5h2M387,287.5h1M392,287.5h1M394,287.5h1M384,288.5h1M387,288.5h1M389,288.5h1M385,289.5h1M390,289.5h1M383,291.5h1M385,291.5h1"/>
<path stroke="#777272" stroke-width="1.3" fill="none" d="M487.7,172.7L480.7,179.2M490.2,175.4L483.2,181.8M492.6,178.0L485.6,184.5M495.1,180.7L488.1,187.1M497.5,183.3L490.4,189.7M499.9,186.0L492.8,192.4M502.3,188.7L495.2,195.1M504.7,191.4L497.6,197.8M507.1,194.6L499.2,199.9M509.7,198.5L501.8,203.8M512.3,202.4L504.5,207.7M514.2,205.8L505.5,209.5M515.7,209.2L507.0,212.9M517.1,212.5L508.4,216.3M518.6,215.9L509.9,219.7M519.9,219.4L510.9,222.4M521.2,223.4L512.2,226.4M522.5,227.3L513.5,230.3"/>
<circle cx="463.5" cy="257" r="1.3" fill="#000"/>
</g>
<path class="ax" stroke="#f00" d="M216,229.5 L381,231.5"/>
<path class="ax" stroke="#00f" d="M289.5,225.5 L373,230.5"/>
<path class="ax" stroke="#0f0" d="M384.5,119 L380.5,230.5"/>
<path class="c" d="M208.5,55.5 L330.5,55.5 L330.5,149.5 L208.5,149.5 Z"/>
<path class="c" d="M208.5,129.5 L331.5,132.0 L331.0,220.5 L209.5,217.5 Z"/>
<path class="c" d="M210.0,131.5 L333.5,134.0 L332.0,222.5 L210.5,220.0 Z"/>
<path class="c" d="M210.5,199.5 L331.0,204.0 L328.5,300.5 L207.5,296.7 Z"/>
<path class="c" d="M211.5,202.0 L332.0,206.0 L330.0,302.5 L208.5,299.2 Z"/>
<path class="c" d="M207.5,275.5 L329.0,280.0 L325.5,371.7 L204.5,367.5 Z"/>
<path class="c" d="M208.5,278.0 L330.0,282.0 L326.5,374.2 L205.5,370.0 Z"/>
<path class="c" d="M328.5,51.5 L460.0,60.5"/>
<path class="c" d="M330.0,54.5 L458.6,63.3"/>
<path class="c" d="M328.5,51.5 L322.0,110.0 L314.5,190.0 L310.3,263.0 L309.8,288.0" stroke-width="1.4"/>
<path class="c" d="M306.5,274.5 L305.5,350.0 L303.5,407.0"/>
<path class="c" d="M309.5,288.0 L306.0,409.5"/>
<path class="c" d="M460.0,60.5 L452.5,125.0 L448.8,149.0 L445.4,178.0 L440.8,200.0 L438.3,255.0 L436.6,306.0" stroke-width="1.4"/>
<path class="c" d="M458.6,63.3 L451.0,125.0"/>
<path class="c" d="M438.8,303.5 L437.0,411.0"/>
<path class="c" d="M440.4,276.0 L440.4,329.0 L438.6,413.0"/>
<path class="c" d="M435.3,303.0 L435.3,411.0"/>
<path class="c" d="M319.5,126.0 L380.0,132.5 L425.0,137.2 L480.0,142.5 L551.5,154.1"/>
<path class="c" d="M319.5,128.0 L380.0,134.5 L425.0,139.2 L480.0,144.3 L554.0,155.5"/>
<path class="c" d="M320.0,131.0 L332.7,133.2 L385.0,142.5 L428.8,149.1 L447.0,153.3"/>
<path class="c" d="M319.5,133.0 L332.7,135.2 L385.0,144.5 L428.8,151.1 L447.0,155.3"/>
<path class="c" d="M315.0,191.6 L370.0,200.2 L418.7,208.3 L441.0,212.0"/>
<path class="c" d="M315.5,193.6 L370.0,202.7 L418.7,210.8 L441.0,214.5"/>
<path class="c" d="M312.5,199.6 L370.0,211.6 L418.7,220.4 L441.0,224.5"/>
<path class="c" d="M313.0,202.5 L370.0,213.8 L418.7,223.2 L441.0,227.5"/>
<path class="c" d="M422.0,199.4 L441.0,204.4 L510.0,226.5 L555.7,240.8"/>
<path class="c" d="M422.0,201.5 L441.0,206.6 L510.0,229.3 L555.7,243.3"/>
<path class="c" d="M419.5,213.0 L441.0,219.3 L510.0,238.7 L554.0,253.3"/>
<path class="c" d="M419.0,216.0 L441.0,222.0 L510.0,241.4 L554.0,255.8"/>
<path class="c" d="M306.6,274.6 L375.0,289.0 L438.8,303.5"/>
<path class="c" d="M309.9,287.8 L345.0,297.0 L398.0,308.5 L435.0,317.0"/>
<path class="c" d="M309.0,289.0 L398.0,316.0 L436.3,327.6"/>
<path class="c" d="M303.5,407.0 L437.0,411.0"/>
<path class="c" d="M303.5,409.5 L438.6,413.0"/>
<path class="c" d="M433.3,49.5 L563.7,59.6"/>
<path class="c" d="M436.0,50.8 L559.6,59.6"/>
<path class="c" d="M433.3,49.5 L424.6,146.5"/>
<path class="c" d="M436.0,50.8 L428.8,149.0"/>
<path class="c" d="M563.7,59.6 L554.0,155.0"/>
<path class="c" d="M559.6,59.6 L550.2,155.0"/>
<path class="c" d="M424.6,136.0 L430.0,136.5 L430.0,146.6 L424.6,146.5"/>
<path class="c" d="M428.8,147.5 L565.7,155.8"/>
<path class="c" d="M428.8,149.0 L565.7,157.0"/>
<path class="c" d="M565.7,155.8 L556.6,240.8 L554.0,255.8 L544.3,341.0" stroke-width="1.4"/>
<path class="c" d="M429.5,149.0 L420.8,200.0 L419.0,226.0 L412.5,281.6 L412.6,308.5" stroke-width="1.4"/>
<path class="c" d="M413.0,303.5 L544.3,337.5"/>
<path class="c" d="M412.6,308.5 L435.0,315.0 L510.0,332.4 L544.3,341.0"/>
<path class="c" d="M412.3,281.5 L536.8,293.7 L525.2,389.5 L400.4,376.2 Z"/>
<path class="c" d="M413.5,284.6 L536.0,297.3"/>
<path class="c" d="M401.3,372.0 L525.8,385.0"/>
<rect x="204.5" y="55.5" width="123" height="94" fill="none" stroke="#f0f" stroke-width="1" shape-rendering="crispEdges"/>
<rect x="204.5" y="55.5" width="123" height="94" fill="none" stroke="#ff0" stroke-width="1" stroke-dasharray="4 4" shape-rendering="crispEdges"/>
<rect x="480.50" y="15" width="13.69" height="19" fill="rgb(0,0,0)" shape-rendering="crispEdges"/>
<rect x="493.89" y="15" width="13.69" height="19" fill="rgb(15,15,15)" shape-rendering="crispEdges"/>
<rect x="507.28" y="15" width="13.69" height="19" fill="rgb(30,30,30)" shape-rendering="crispEdges"/>
<rect x="520.67" y="15" width="13.69" height="19" fill="rgb(45,45,45)" shape-rendering="crispEdges"/>
<rect x="534.06" y="15" width="13.69" height="19" fill="rgb(60,60,60)" shape-rendering="crispEdges"/>
<rect x="547.44" y="15" width="13.69" height="19" fill="rgb(75,75,75)" shape-rendering="crispEdges"/>
<rect x="560.83" y="15" width="13.69" height="19" fill="rgb(90,90,90)" shape-rendering="crispEdges"/>
<rect x="574.22" y="15" width="13.69" height="19" fill="rgb(105,105,105)" shape-rendering="crispEdges"/>
<rect x="587.61" y="15" width="13.69" height="19" fill="rgb(120,120,120)" shape-rendering="crispEdges"/>
<rect x="601.00" y="15" width="13.69" height="19" fill="rgb(135,135,135)" shape-rendering="crispEdges"/>
<rect x="614.39" y="15" width="13.69" height="19" fill="rgb(150,150,150)" shape-rendering="crispEdges"/>
<rect x="627.78" y="15" width="13.69" height="19" fill="rgb(165,165,165)" shape-rendering="crispEdges"/>
<rect x="641.17" y="15" width="13.69" height="19" fill="rgb(180,180,180)" shape-rendering="crispEdges"/>
<rect x="654.56" y="15" width="13.69" height="19" fill="rgb(195,195,195)" shape-rendering="crispEdges"/>
<rect x="667.94" y="15" width="13.69" height="19" fill="rgb(210,210,210)" shape-rendering="crispEdges"/>
<rect x="681.33" y="15" width="13.69" height="19" fill="rgb(225,225,225)" shape-rendering="crispEdges"/>
<rect x="694.72" y="15" width="13.69" height="19" fill="rgb(240,240,240)" shape-rendering="crispEdges"/>
<rect x="708.11" y="15" width="13.69" height="19" fill="rgb(255,255,255)" shape-rendering="crispEdges"/>
<path class="ax" stroke="#fff" d="M480.5,12 V35.5 M721.5,12 V35.5 M528.5,34 V36.5 M576.5,34 V36.5 M624.5,34 V36.5 M672.5,34 V36.5"/>
<text transform="translate(479.5,11.3) scale(0.7811,1)" xml:space="preserve" fill="#fff">0</text>
<text transform="translate(714.5,11.3) scale(0.7811,1)" xml:space="preserve" fill="#fff">1</text>
<text transform="translate(527.8,48) scale(0.7811,1)" xml:space="preserve" fill="#fff">0.2</text>
<text transform="translate(575.8,48) scale(0.7811,1)" xml:space="preserve" fill="#fff">0.4</text>
<text transform="translate(623.8,48) scale(0.7811,1)" xml:space="preserve" fill="#fff">0.6</text>
<text transform="translate(671.8,48) scale(0.7811,1)" xml:space="preserve" fill="#fff">0.8</text>
<rect x="0" y="407" width="66" height="14" fill="#fff" shape-rendering="crispEdges"/>
<rect x="1" y="408" width="12" height="6" fill="#000" shape-rendering="crispEdges"/>
<rect x="13" y="414" width="14" height="6" fill="#000" shape-rendering="crispEdges"/>
<rect x="27" y="408" width="13" height="6" fill="#000" shape-rendering="crispEdges"/>
<rect x="40" y="414" width="13" height="6" fill="#000" shape-rendering="crispEdges"/>
<rect x="53" y="408" width="12" height="6" fill="#000" shape-rendering="crispEdges"/>
<text transform="translate(20.5,404.8) scale(0.7811,1)" xml:space="preserve" fill="#fff">5 km</text>
<text transform="translate(73,418.7) scale(0.7811,1)" xml:space="preserve" fill="#fff">MSI:  2000-335T20:34:32.00 to 2000-335T20:45:56.00 (6/0151026706 to 6/0151027390)</text>
<text transform="translate(7,441.8) scale(0.7811,1)" xml:space="preserve" fill="#fff">High South Globals_335</text>
<text transform="translate(7,455.8) scale(0.7811,1)" xml:space="preserve" fill="#fff">Mosaic 2</text>
<text transform="translate(7,469.8) scale(0.7811,1)" xml:space="preserve" fill="#fff">3x4_3 mosaic in filter 4, clean</text>
</svg></body></html>
